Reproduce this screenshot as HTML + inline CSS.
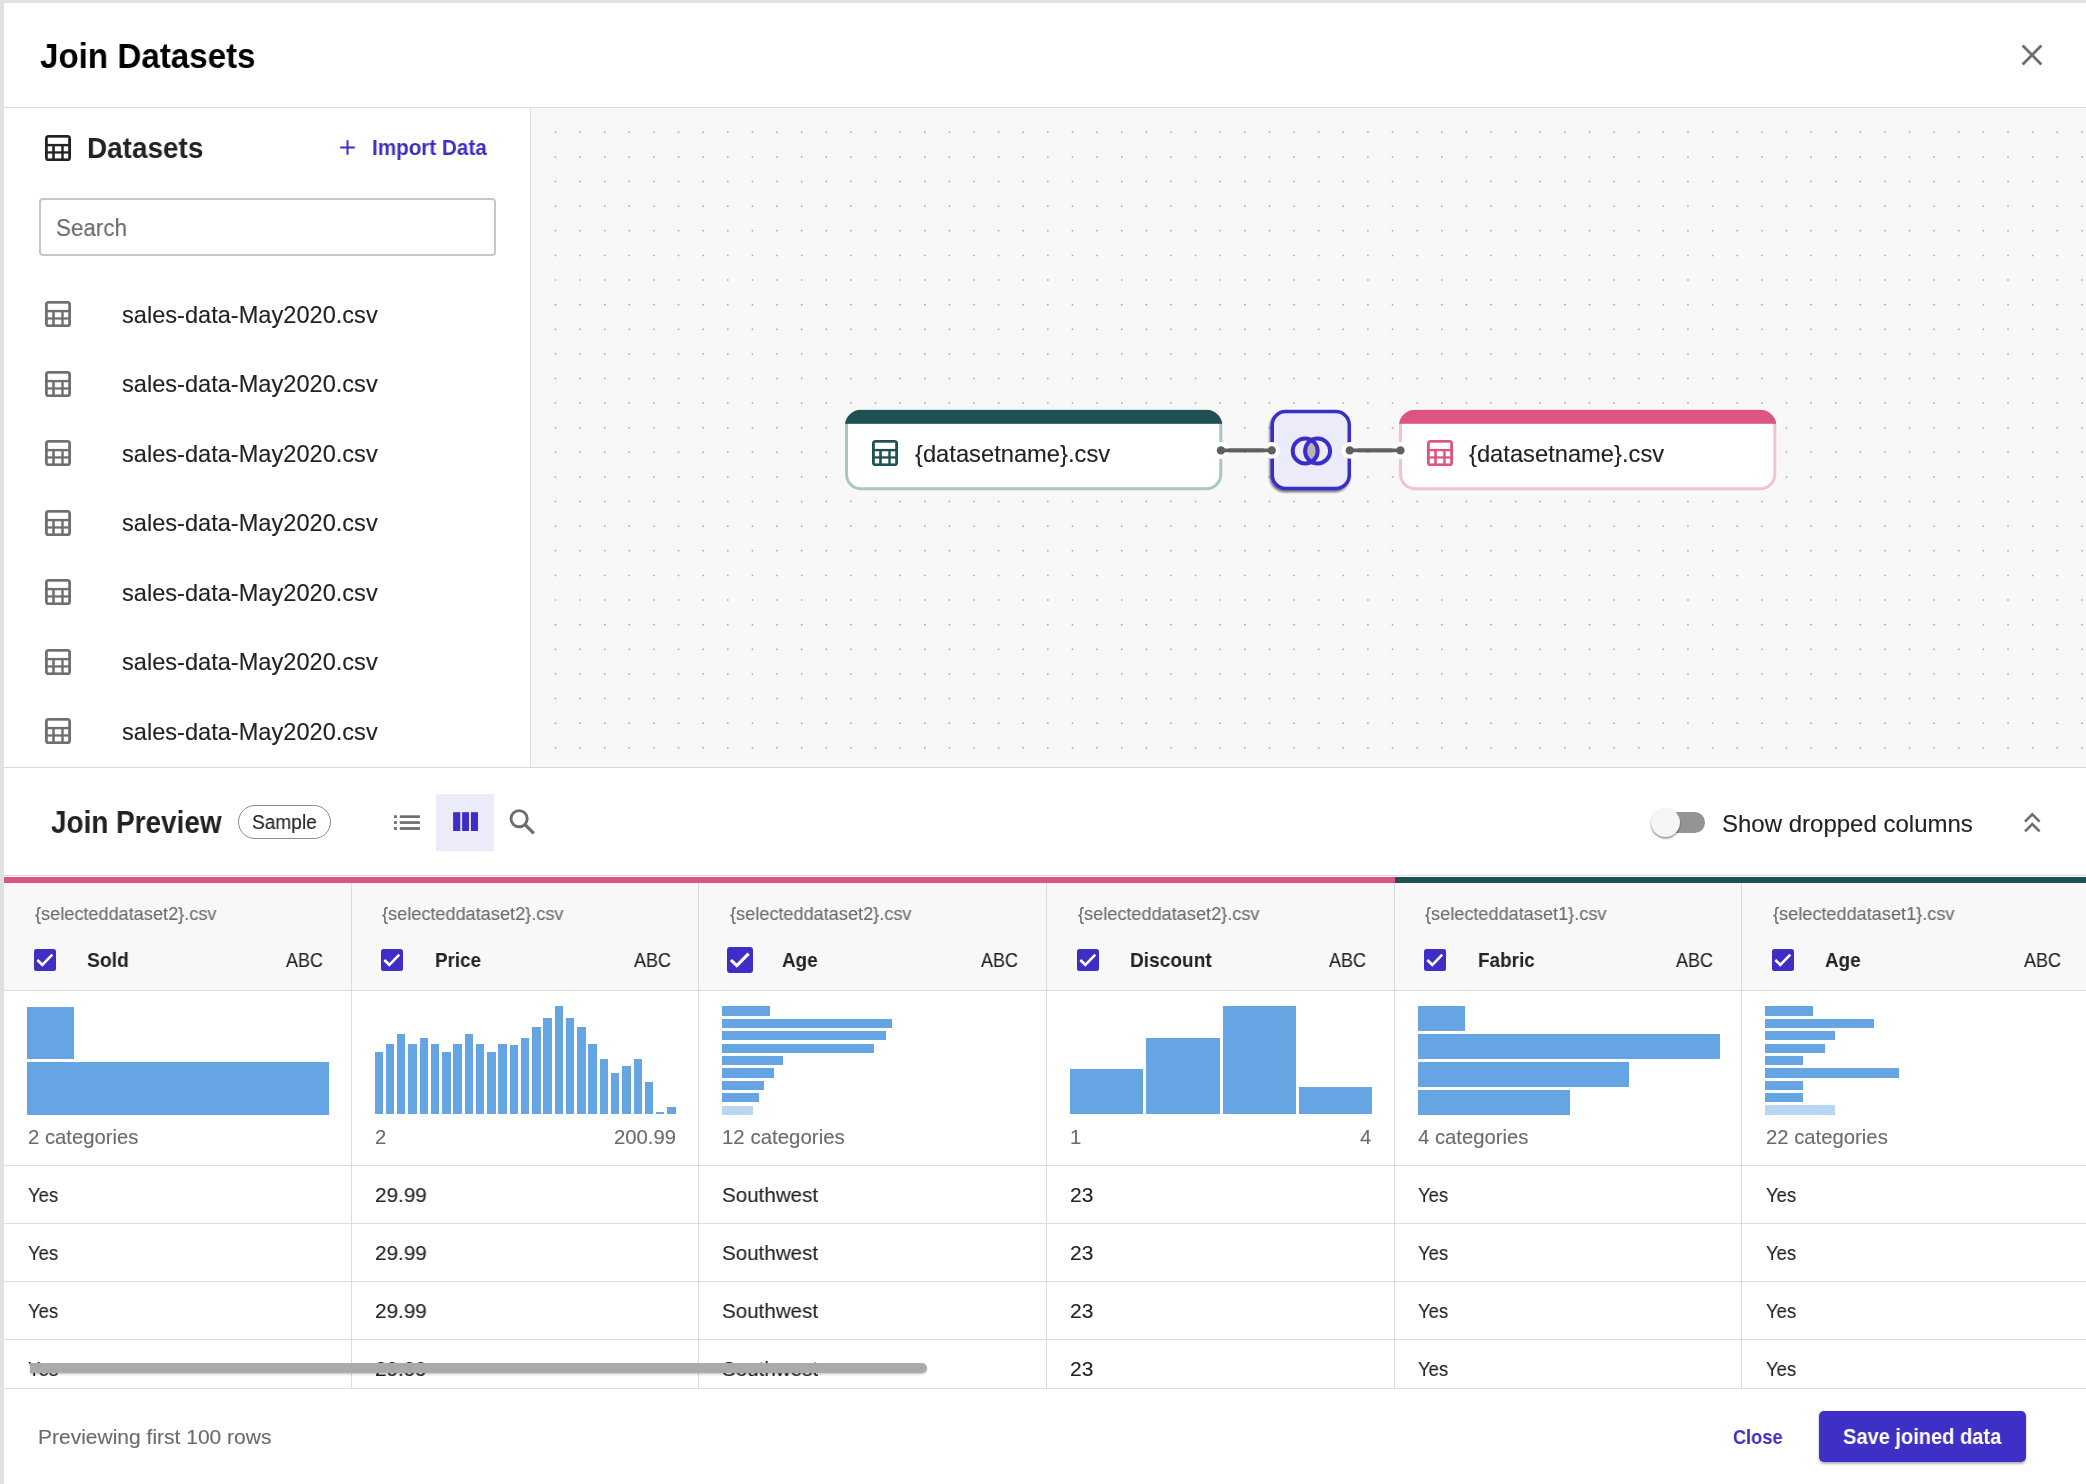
<!DOCTYPE html>
<html><head><meta charset="utf-8"><style>
html,body{margin:0;padding:0;}
body{width:2086px;height:1484px;position:relative;overflow:hidden;background:#ffffff;font-family:"Liberation Sans",sans-serif;}
.a{position:absolute;box-sizing:content-box;}
.t{position:absolute;line-height:1;white-space:nowrap;transform-origin:0 0;will-change:transform;}
.canvas{background-color:#f8f8f8;background-image:radial-gradient(circle at center,#a9a9a9 0,#a9a9a9 0.8px,rgba(169,169,169,0) 1.3px);background-size:24.6px 24.6px;background-position:12.1px 12px;}
</style></head><body>
<div class="a" style="left:0;top:0;width:2086px;height:3px;background:#e1e1e1"></div>
<div class="a" style="left:0;top:0;width:4px;height:1484px;background:#e1e1e1"></div>
<div class="a" style="left:4px;top:107px;width:2082px;height:1px;background:#d9d9d9"></div>
<svg class="a" style="left:2020px;top:43px" width="24" height="24" viewBox="0 0 24 24"><path d="M2.6 2.6L21.4 21.4M21.4 2.6L2.6 21.4" stroke="#6e6e6e" stroke-width="2.8" fill="none"/></svg>
<div class="a" style="left:530px;top:108px;width:1px;height:660px;background:#dedede"></div>
<svg class="a" style="left:531px;top:108px" width="1555" height="660"><rect width="1555" height="660" fill="#f8f8f8"/><path fill="#a6a6a6" d="M23.71 23.55h1.5v1.5h-1.5zM48.33 23.55h1.5v1.5h-1.5zM72.95 23.55h1.5v1.5h-1.5zM97.57 23.55h1.5v1.5h-1.5zM122.19 23.55h1.5v1.5h-1.5zM146.81 23.55h1.5v1.5h-1.5zM171.43 23.55h1.5v1.5h-1.5zM196.05 23.55h1.5v1.5h-1.5zM220.67 23.55h1.5v1.5h-1.5zM245.29 23.55h1.5v1.5h-1.5zM269.91 23.55h1.5v1.5h-1.5zM294.53 23.55h1.5v1.5h-1.5zM319.15 23.55h1.5v1.5h-1.5zM343.77 23.55h1.5v1.5h-1.5zM368.39 23.55h1.5v1.5h-1.5zM393.01 23.55h1.5v1.5h-1.5zM417.63 23.55h1.5v1.5h-1.5zM442.25 23.55h1.5v1.5h-1.5zM466.87 23.55h1.5v1.5h-1.5zM491.49 23.55h1.5v1.5h-1.5zM516.11 23.55h1.5v1.5h-1.5zM540.73 23.55h1.5v1.5h-1.5zM565.35 23.55h1.5v1.5h-1.5zM589.97 23.55h1.5v1.5h-1.5zM614.59 23.55h1.5v1.5h-1.5zM639.21 23.55h1.5v1.5h-1.5zM663.83 23.55h1.5v1.5h-1.5zM688.45 23.55h1.5v1.5h-1.5zM713.07 23.55h1.5v1.5h-1.5zM737.69 23.55h1.5v1.5h-1.5zM762.31 23.55h1.5v1.5h-1.5zM786.93 23.55h1.5v1.5h-1.5zM811.55 23.55h1.5v1.5h-1.5zM836.17 23.55h1.5v1.5h-1.5zM860.79 23.55h1.5v1.5h-1.5zM885.41 23.55h1.5v1.5h-1.5zM910.03 23.55h1.5v1.5h-1.5zM934.65 23.55h1.5v1.5h-1.5zM959.27 23.55h1.5v1.5h-1.5zM983.89 23.55h1.5v1.5h-1.5zM1008.51 23.55h1.5v1.5h-1.5zM1033.13 23.55h1.5v1.5h-1.5zM1057.75 23.55h1.5v1.5h-1.5zM1082.37 23.55h1.5v1.5h-1.5zM1106.99 23.55h1.5v1.5h-1.5zM1131.61 23.55h1.5v1.5h-1.5zM1156.23 23.55h1.5v1.5h-1.5zM1180.85 23.55h1.5v1.5h-1.5zM1205.47 23.55h1.5v1.5h-1.5zM1230.09 23.55h1.5v1.5h-1.5zM1254.71 23.55h1.5v1.5h-1.5zM1279.33 23.55h1.5v1.5h-1.5zM1303.95 23.55h1.5v1.5h-1.5zM1328.57 23.55h1.5v1.5h-1.5zM1353.19 23.55h1.5v1.5h-1.5zM1377.81 23.55h1.5v1.5h-1.5zM1402.43 23.55h1.5v1.5h-1.5zM1427.05 23.55h1.5v1.5h-1.5zM1451.67 23.55h1.5v1.5h-1.5zM1476.29 23.55h1.5v1.5h-1.5zM1500.91 23.55h1.5v1.5h-1.5zM1525.53 23.55h1.5v1.5h-1.5zM1550.15 23.55h1.5v1.5h-1.5zM23.71 48.17h1.5v1.5h-1.5zM48.33 48.17h1.5v1.5h-1.5zM72.95 48.17h1.5v1.5h-1.5zM97.57 48.17h1.5v1.5h-1.5zM122.19 48.17h1.5v1.5h-1.5zM146.81 48.17h1.5v1.5h-1.5zM171.43 48.17h1.5v1.5h-1.5zM196.05 48.17h1.5v1.5h-1.5zM220.67 48.17h1.5v1.5h-1.5zM245.29 48.17h1.5v1.5h-1.5zM269.91 48.17h1.5v1.5h-1.5zM294.53 48.17h1.5v1.5h-1.5zM319.15 48.17h1.5v1.5h-1.5zM343.77 48.17h1.5v1.5h-1.5zM368.39 48.17h1.5v1.5h-1.5zM393.01 48.17h1.5v1.5h-1.5zM417.63 48.17h1.5v1.5h-1.5zM442.25 48.17h1.5v1.5h-1.5zM466.87 48.17h1.5v1.5h-1.5zM491.49 48.17h1.5v1.5h-1.5zM516.11 48.17h1.5v1.5h-1.5zM540.73 48.17h1.5v1.5h-1.5zM565.35 48.17h1.5v1.5h-1.5zM589.97 48.17h1.5v1.5h-1.5zM614.59 48.17h1.5v1.5h-1.5zM639.21 48.17h1.5v1.5h-1.5zM663.83 48.17h1.5v1.5h-1.5zM688.45 48.17h1.5v1.5h-1.5zM713.07 48.17h1.5v1.5h-1.5zM737.69 48.17h1.5v1.5h-1.5zM762.31 48.17h1.5v1.5h-1.5zM786.93 48.17h1.5v1.5h-1.5zM811.55 48.17h1.5v1.5h-1.5zM836.17 48.17h1.5v1.5h-1.5zM860.79 48.17h1.5v1.5h-1.5zM885.41 48.17h1.5v1.5h-1.5zM910.03 48.17h1.5v1.5h-1.5zM934.65 48.17h1.5v1.5h-1.5zM959.27 48.17h1.5v1.5h-1.5zM983.89 48.17h1.5v1.5h-1.5zM1008.51 48.17h1.5v1.5h-1.5zM1033.13 48.17h1.5v1.5h-1.5zM1057.75 48.17h1.5v1.5h-1.5zM1082.37 48.17h1.5v1.5h-1.5zM1106.99 48.17h1.5v1.5h-1.5zM1131.61 48.17h1.5v1.5h-1.5zM1156.23 48.17h1.5v1.5h-1.5zM1180.85 48.17h1.5v1.5h-1.5zM1205.47 48.17h1.5v1.5h-1.5zM1230.09 48.17h1.5v1.5h-1.5zM1254.71 48.17h1.5v1.5h-1.5zM1279.33 48.17h1.5v1.5h-1.5zM1303.95 48.17h1.5v1.5h-1.5zM1328.57 48.17h1.5v1.5h-1.5zM1353.19 48.17h1.5v1.5h-1.5zM1377.81 48.17h1.5v1.5h-1.5zM1402.43 48.17h1.5v1.5h-1.5zM1427.05 48.17h1.5v1.5h-1.5zM1451.67 48.17h1.5v1.5h-1.5zM1476.29 48.17h1.5v1.5h-1.5zM1500.91 48.17h1.5v1.5h-1.5zM1525.53 48.17h1.5v1.5h-1.5zM1550.15 48.17h1.5v1.5h-1.5zM23.71 72.79h1.5v1.5h-1.5zM48.33 72.79h1.5v1.5h-1.5zM72.95 72.79h1.5v1.5h-1.5zM97.57 72.79h1.5v1.5h-1.5zM122.19 72.79h1.5v1.5h-1.5zM146.81 72.79h1.5v1.5h-1.5zM171.43 72.79h1.5v1.5h-1.5zM196.05 72.79h1.5v1.5h-1.5zM220.67 72.79h1.5v1.5h-1.5zM245.29 72.79h1.5v1.5h-1.5zM269.91 72.79h1.5v1.5h-1.5zM294.53 72.79h1.5v1.5h-1.5zM319.15 72.79h1.5v1.5h-1.5zM343.77 72.79h1.5v1.5h-1.5zM368.39 72.79h1.5v1.5h-1.5zM393.01 72.79h1.5v1.5h-1.5zM417.63 72.79h1.5v1.5h-1.5zM442.25 72.79h1.5v1.5h-1.5zM466.87 72.79h1.5v1.5h-1.5zM491.49 72.79h1.5v1.5h-1.5zM516.11 72.79h1.5v1.5h-1.5zM540.73 72.79h1.5v1.5h-1.5zM565.35 72.79h1.5v1.5h-1.5zM589.97 72.79h1.5v1.5h-1.5zM614.59 72.79h1.5v1.5h-1.5zM639.21 72.79h1.5v1.5h-1.5zM663.83 72.79h1.5v1.5h-1.5zM688.45 72.79h1.5v1.5h-1.5zM713.07 72.79h1.5v1.5h-1.5zM737.69 72.79h1.5v1.5h-1.5zM762.31 72.79h1.5v1.5h-1.5zM786.93 72.79h1.5v1.5h-1.5zM811.55 72.79h1.5v1.5h-1.5zM836.17 72.79h1.5v1.5h-1.5zM860.79 72.79h1.5v1.5h-1.5zM885.41 72.79h1.5v1.5h-1.5zM910.03 72.79h1.5v1.5h-1.5zM934.65 72.79h1.5v1.5h-1.5zM959.27 72.79h1.5v1.5h-1.5zM983.89 72.79h1.5v1.5h-1.5zM1008.51 72.79h1.5v1.5h-1.5zM1033.13 72.79h1.5v1.5h-1.5zM1057.75 72.79h1.5v1.5h-1.5zM1082.37 72.79h1.5v1.5h-1.5zM1106.99 72.79h1.5v1.5h-1.5zM1131.61 72.79h1.5v1.5h-1.5zM1156.23 72.79h1.5v1.5h-1.5zM1180.85 72.79h1.5v1.5h-1.5zM1205.47 72.79h1.5v1.5h-1.5zM1230.09 72.79h1.5v1.5h-1.5zM1254.71 72.79h1.5v1.5h-1.5zM1279.33 72.79h1.5v1.5h-1.5zM1303.95 72.79h1.5v1.5h-1.5zM1328.57 72.79h1.5v1.5h-1.5zM1353.19 72.79h1.5v1.5h-1.5zM1377.81 72.79h1.5v1.5h-1.5zM1402.43 72.79h1.5v1.5h-1.5zM1427.05 72.79h1.5v1.5h-1.5zM1451.67 72.79h1.5v1.5h-1.5zM1476.29 72.79h1.5v1.5h-1.5zM1500.91 72.79h1.5v1.5h-1.5zM1525.53 72.79h1.5v1.5h-1.5zM1550.15 72.79h1.5v1.5h-1.5zM23.71 97.41h1.5v1.5h-1.5zM48.33 97.41h1.5v1.5h-1.5zM72.95 97.41h1.5v1.5h-1.5zM97.57 97.41h1.5v1.5h-1.5zM122.19 97.41h1.5v1.5h-1.5zM146.81 97.41h1.5v1.5h-1.5zM171.43 97.41h1.5v1.5h-1.5zM196.05 97.41h1.5v1.5h-1.5zM220.67 97.41h1.5v1.5h-1.5zM245.29 97.41h1.5v1.5h-1.5zM269.91 97.41h1.5v1.5h-1.5zM294.53 97.41h1.5v1.5h-1.5zM319.15 97.41h1.5v1.5h-1.5zM343.77 97.41h1.5v1.5h-1.5zM368.39 97.41h1.5v1.5h-1.5zM393.01 97.41h1.5v1.5h-1.5zM417.63 97.41h1.5v1.5h-1.5zM442.25 97.41h1.5v1.5h-1.5zM466.87 97.41h1.5v1.5h-1.5zM491.49 97.41h1.5v1.5h-1.5zM516.11 97.41h1.5v1.5h-1.5zM540.73 97.41h1.5v1.5h-1.5zM565.35 97.41h1.5v1.5h-1.5zM589.97 97.41h1.5v1.5h-1.5zM614.59 97.41h1.5v1.5h-1.5zM639.21 97.41h1.5v1.5h-1.5zM663.83 97.41h1.5v1.5h-1.5zM688.45 97.41h1.5v1.5h-1.5zM713.07 97.41h1.5v1.5h-1.5zM737.69 97.41h1.5v1.5h-1.5zM762.31 97.41h1.5v1.5h-1.5zM786.93 97.41h1.5v1.5h-1.5zM811.55 97.41h1.5v1.5h-1.5zM836.17 97.41h1.5v1.5h-1.5zM860.79 97.41h1.5v1.5h-1.5zM885.41 97.41h1.5v1.5h-1.5zM910.03 97.41h1.5v1.5h-1.5zM934.65 97.41h1.5v1.5h-1.5zM959.27 97.41h1.5v1.5h-1.5zM983.89 97.41h1.5v1.5h-1.5zM1008.51 97.41h1.5v1.5h-1.5zM1033.13 97.41h1.5v1.5h-1.5zM1057.75 97.41h1.5v1.5h-1.5zM1082.37 97.41h1.5v1.5h-1.5zM1106.99 97.41h1.5v1.5h-1.5zM1131.61 97.41h1.5v1.5h-1.5zM1156.23 97.41h1.5v1.5h-1.5zM1180.85 97.41h1.5v1.5h-1.5zM1205.47 97.41h1.5v1.5h-1.5zM1230.09 97.41h1.5v1.5h-1.5zM1254.71 97.41h1.5v1.5h-1.5zM1279.33 97.41h1.5v1.5h-1.5zM1303.95 97.41h1.5v1.5h-1.5zM1328.57 97.41h1.5v1.5h-1.5zM1353.19 97.41h1.5v1.5h-1.5zM1377.81 97.41h1.5v1.5h-1.5zM1402.43 97.41h1.5v1.5h-1.5zM1427.05 97.41h1.5v1.5h-1.5zM1451.67 97.41h1.5v1.5h-1.5zM1476.29 97.41h1.5v1.5h-1.5zM1500.91 97.41h1.5v1.5h-1.5zM1525.53 97.41h1.5v1.5h-1.5zM1550.15 97.41h1.5v1.5h-1.5zM23.71 122.03h1.5v1.5h-1.5zM48.33 122.03h1.5v1.5h-1.5zM72.95 122.03h1.5v1.5h-1.5zM97.57 122.03h1.5v1.5h-1.5zM122.19 122.03h1.5v1.5h-1.5zM146.81 122.03h1.5v1.5h-1.5zM171.43 122.03h1.5v1.5h-1.5zM196.05 122.03h1.5v1.5h-1.5zM220.67 122.03h1.5v1.5h-1.5zM245.29 122.03h1.5v1.5h-1.5zM269.91 122.03h1.5v1.5h-1.5zM294.53 122.03h1.5v1.5h-1.5zM319.15 122.03h1.5v1.5h-1.5zM343.77 122.03h1.5v1.5h-1.5zM368.39 122.03h1.5v1.5h-1.5zM393.01 122.03h1.5v1.5h-1.5zM417.63 122.03h1.5v1.5h-1.5zM442.25 122.03h1.5v1.5h-1.5zM466.87 122.03h1.5v1.5h-1.5zM491.49 122.03h1.5v1.5h-1.5zM516.11 122.03h1.5v1.5h-1.5zM540.73 122.03h1.5v1.5h-1.5zM565.35 122.03h1.5v1.5h-1.5zM589.97 122.03h1.5v1.5h-1.5zM614.59 122.03h1.5v1.5h-1.5zM639.21 122.03h1.5v1.5h-1.5zM663.83 122.03h1.5v1.5h-1.5zM688.45 122.03h1.5v1.5h-1.5zM713.07 122.03h1.5v1.5h-1.5zM737.69 122.03h1.5v1.5h-1.5zM762.31 122.03h1.5v1.5h-1.5zM786.93 122.03h1.5v1.5h-1.5zM811.55 122.03h1.5v1.5h-1.5zM836.17 122.03h1.5v1.5h-1.5zM860.79 122.03h1.5v1.5h-1.5zM885.41 122.03h1.5v1.5h-1.5zM910.03 122.03h1.5v1.5h-1.5zM934.65 122.03h1.5v1.5h-1.5zM959.27 122.03h1.5v1.5h-1.5zM983.89 122.03h1.5v1.5h-1.5zM1008.51 122.03h1.5v1.5h-1.5zM1033.13 122.03h1.5v1.5h-1.5zM1057.75 122.03h1.5v1.5h-1.5zM1082.37 122.03h1.5v1.5h-1.5zM1106.99 122.03h1.5v1.5h-1.5zM1131.61 122.03h1.5v1.5h-1.5zM1156.23 122.03h1.5v1.5h-1.5zM1180.85 122.03h1.5v1.5h-1.5zM1205.47 122.03h1.5v1.5h-1.5zM1230.09 122.03h1.5v1.5h-1.5zM1254.71 122.03h1.5v1.5h-1.5zM1279.33 122.03h1.5v1.5h-1.5zM1303.95 122.03h1.5v1.5h-1.5zM1328.57 122.03h1.5v1.5h-1.5zM1353.19 122.03h1.5v1.5h-1.5zM1377.81 122.03h1.5v1.5h-1.5zM1402.43 122.03h1.5v1.5h-1.5zM1427.05 122.03h1.5v1.5h-1.5zM1451.67 122.03h1.5v1.5h-1.5zM1476.29 122.03h1.5v1.5h-1.5zM1500.91 122.03h1.5v1.5h-1.5zM1525.53 122.03h1.5v1.5h-1.5zM1550.15 122.03h1.5v1.5h-1.5zM23.71 146.65h1.5v1.5h-1.5zM48.33 146.65h1.5v1.5h-1.5zM72.95 146.65h1.5v1.5h-1.5zM97.57 146.65h1.5v1.5h-1.5zM122.19 146.65h1.5v1.5h-1.5zM146.81 146.65h1.5v1.5h-1.5zM171.43 146.65h1.5v1.5h-1.5zM196.05 146.65h1.5v1.5h-1.5zM220.67 146.65h1.5v1.5h-1.5zM245.29 146.65h1.5v1.5h-1.5zM269.91 146.65h1.5v1.5h-1.5zM294.53 146.65h1.5v1.5h-1.5zM319.15 146.65h1.5v1.5h-1.5zM343.77 146.65h1.5v1.5h-1.5zM368.39 146.65h1.5v1.5h-1.5zM393.01 146.65h1.5v1.5h-1.5zM417.63 146.65h1.5v1.5h-1.5zM442.25 146.65h1.5v1.5h-1.5zM466.87 146.65h1.5v1.5h-1.5zM491.49 146.65h1.5v1.5h-1.5zM516.11 146.65h1.5v1.5h-1.5zM540.73 146.65h1.5v1.5h-1.5zM565.35 146.65h1.5v1.5h-1.5zM589.97 146.65h1.5v1.5h-1.5zM614.59 146.65h1.5v1.5h-1.5zM639.21 146.65h1.5v1.5h-1.5zM663.83 146.65h1.5v1.5h-1.5zM688.45 146.65h1.5v1.5h-1.5zM713.07 146.65h1.5v1.5h-1.5zM737.69 146.65h1.5v1.5h-1.5zM762.31 146.65h1.5v1.5h-1.5zM786.93 146.65h1.5v1.5h-1.5zM811.55 146.65h1.5v1.5h-1.5zM836.17 146.65h1.5v1.5h-1.5zM860.79 146.65h1.5v1.5h-1.5zM885.41 146.65h1.5v1.5h-1.5zM910.03 146.65h1.5v1.5h-1.5zM934.65 146.65h1.5v1.5h-1.5zM959.27 146.65h1.5v1.5h-1.5zM983.89 146.65h1.5v1.5h-1.5zM1008.51 146.65h1.5v1.5h-1.5zM1033.13 146.65h1.5v1.5h-1.5zM1057.75 146.65h1.5v1.5h-1.5zM1082.37 146.65h1.5v1.5h-1.5zM1106.99 146.65h1.5v1.5h-1.5zM1131.61 146.65h1.5v1.5h-1.5zM1156.23 146.65h1.5v1.5h-1.5zM1180.85 146.65h1.5v1.5h-1.5zM1205.47 146.65h1.5v1.5h-1.5zM1230.09 146.65h1.5v1.5h-1.5zM1254.71 146.65h1.5v1.5h-1.5zM1279.33 146.65h1.5v1.5h-1.5zM1303.95 146.65h1.5v1.5h-1.5zM1328.57 146.65h1.5v1.5h-1.5zM1353.19 146.65h1.5v1.5h-1.5zM1377.81 146.65h1.5v1.5h-1.5zM1402.43 146.65h1.5v1.5h-1.5zM1427.05 146.65h1.5v1.5h-1.5zM1451.67 146.65h1.5v1.5h-1.5zM1476.29 146.65h1.5v1.5h-1.5zM1500.91 146.65h1.5v1.5h-1.5zM1525.53 146.65h1.5v1.5h-1.5zM1550.15 146.65h1.5v1.5h-1.5zM23.71 171.27h1.5v1.5h-1.5zM48.33 171.27h1.5v1.5h-1.5zM72.95 171.27h1.5v1.5h-1.5zM97.57 171.27h1.5v1.5h-1.5zM122.19 171.27h1.5v1.5h-1.5zM146.81 171.27h1.5v1.5h-1.5zM171.43 171.27h1.5v1.5h-1.5zM196.05 171.27h1.5v1.5h-1.5zM220.67 171.27h1.5v1.5h-1.5zM245.29 171.27h1.5v1.5h-1.5zM269.91 171.27h1.5v1.5h-1.5zM294.53 171.27h1.5v1.5h-1.5zM319.15 171.27h1.5v1.5h-1.5zM343.77 171.27h1.5v1.5h-1.5zM368.39 171.27h1.5v1.5h-1.5zM393.01 171.27h1.5v1.5h-1.5zM417.63 171.27h1.5v1.5h-1.5zM442.25 171.27h1.5v1.5h-1.5zM466.87 171.27h1.5v1.5h-1.5zM491.49 171.27h1.5v1.5h-1.5zM516.11 171.27h1.5v1.5h-1.5zM540.73 171.27h1.5v1.5h-1.5zM565.35 171.27h1.5v1.5h-1.5zM589.97 171.27h1.5v1.5h-1.5zM614.59 171.27h1.5v1.5h-1.5zM639.21 171.27h1.5v1.5h-1.5zM663.83 171.27h1.5v1.5h-1.5zM688.45 171.27h1.5v1.5h-1.5zM713.07 171.27h1.5v1.5h-1.5zM737.69 171.27h1.5v1.5h-1.5zM762.31 171.27h1.5v1.5h-1.5zM786.93 171.27h1.5v1.5h-1.5zM811.55 171.27h1.5v1.5h-1.5zM836.17 171.27h1.5v1.5h-1.5zM860.79 171.27h1.5v1.5h-1.5zM885.41 171.27h1.5v1.5h-1.5zM910.03 171.27h1.5v1.5h-1.5zM934.65 171.27h1.5v1.5h-1.5zM959.27 171.27h1.5v1.5h-1.5zM983.89 171.27h1.5v1.5h-1.5zM1008.51 171.27h1.5v1.5h-1.5zM1033.13 171.27h1.5v1.5h-1.5zM1057.75 171.27h1.5v1.5h-1.5zM1082.37 171.27h1.5v1.5h-1.5zM1106.99 171.27h1.5v1.5h-1.5zM1131.61 171.27h1.5v1.5h-1.5zM1156.23 171.27h1.5v1.5h-1.5zM1180.85 171.27h1.5v1.5h-1.5zM1205.47 171.27h1.5v1.5h-1.5zM1230.09 171.27h1.5v1.5h-1.5zM1254.71 171.27h1.5v1.5h-1.5zM1279.33 171.27h1.5v1.5h-1.5zM1303.95 171.27h1.5v1.5h-1.5zM1328.57 171.27h1.5v1.5h-1.5zM1353.19 171.27h1.5v1.5h-1.5zM1377.81 171.27h1.5v1.5h-1.5zM1402.43 171.27h1.5v1.5h-1.5zM1427.05 171.27h1.5v1.5h-1.5zM1451.67 171.27h1.5v1.5h-1.5zM1476.29 171.27h1.5v1.5h-1.5zM1500.91 171.27h1.5v1.5h-1.5zM1525.53 171.27h1.5v1.5h-1.5zM1550.15 171.27h1.5v1.5h-1.5zM23.71 195.89h1.5v1.5h-1.5zM48.33 195.89h1.5v1.5h-1.5zM72.95 195.89h1.5v1.5h-1.5zM97.57 195.89h1.5v1.5h-1.5zM122.19 195.89h1.5v1.5h-1.5zM146.81 195.89h1.5v1.5h-1.5zM171.43 195.89h1.5v1.5h-1.5zM196.05 195.89h1.5v1.5h-1.5zM220.67 195.89h1.5v1.5h-1.5zM245.29 195.89h1.5v1.5h-1.5zM269.91 195.89h1.5v1.5h-1.5zM294.53 195.89h1.5v1.5h-1.5zM319.15 195.89h1.5v1.5h-1.5zM343.77 195.89h1.5v1.5h-1.5zM368.39 195.89h1.5v1.5h-1.5zM393.01 195.89h1.5v1.5h-1.5zM417.63 195.89h1.5v1.5h-1.5zM442.25 195.89h1.5v1.5h-1.5zM466.87 195.89h1.5v1.5h-1.5zM491.49 195.89h1.5v1.5h-1.5zM516.11 195.89h1.5v1.5h-1.5zM540.73 195.89h1.5v1.5h-1.5zM565.35 195.89h1.5v1.5h-1.5zM589.97 195.89h1.5v1.5h-1.5zM614.59 195.89h1.5v1.5h-1.5zM639.21 195.89h1.5v1.5h-1.5zM663.83 195.89h1.5v1.5h-1.5zM688.45 195.89h1.5v1.5h-1.5zM713.07 195.89h1.5v1.5h-1.5zM737.69 195.89h1.5v1.5h-1.5zM762.31 195.89h1.5v1.5h-1.5zM786.93 195.89h1.5v1.5h-1.5zM811.55 195.89h1.5v1.5h-1.5zM836.17 195.89h1.5v1.5h-1.5zM860.79 195.89h1.5v1.5h-1.5zM885.41 195.89h1.5v1.5h-1.5zM910.03 195.89h1.5v1.5h-1.5zM934.65 195.89h1.5v1.5h-1.5zM959.27 195.89h1.5v1.5h-1.5zM983.89 195.89h1.5v1.5h-1.5zM1008.51 195.89h1.5v1.5h-1.5zM1033.13 195.89h1.5v1.5h-1.5zM1057.75 195.89h1.5v1.5h-1.5zM1082.37 195.89h1.5v1.5h-1.5zM1106.99 195.89h1.5v1.5h-1.5zM1131.61 195.89h1.5v1.5h-1.5zM1156.23 195.89h1.5v1.5h-1.5zM1180.85 195.89h1.5v1.5h-1.5zM1205.47 195.89h1.5v1.5h-1.5zM1230.09 195.89h1.5v1.5h-1.5zM1254.71 195.89h1.5v1.5h-1.5zM1279.33 195.89h1.5v1.5h-1.5zM1303.95 195.89h1.5v1.5h-1.5zM1328.57 195.89h1.5v1.5h-1.5zM1353.19 195.89h1.5v1.5h-1.5zM1377.81 195.89h1.5v1.5h-1.5zM1402.43 195.89h1.5v1.5h-1.5zM1427.05 195.89h1.5v1.5h-1.5zM1451.67 195.89h1.5v1.5h-1.5zM1476.29 195.89h1.5v1.5h-1.5zM1500.91 195.89h1.5v1.5h-1.5zM1525.53 195.89h1.5v1.5h-1.5zM1550.15 195.89h1.5v1.5h-1.5zM23.71 220.51h1.5v1.5h-1.5zM48.33 220.51h1.5v1.5h-1.5zM72.95 220.51h1.5v1.5h-1.5zM97.57 220.51h1.5v1.5h-1.5zM122.19 220.51h1.5v1.5h-1.5zM146.81 220.51h1.5v1.5h-1.5zM171.43 220.51h1.5v1.5h-1.5zM196.05 220.51h1.5v1.5h-1.5zM220.67 220.51h1.5v1.5h-1.5zM245.29 220.51h1.5v1.5h-1.5zM269.91 220.51h1.5v1.5h-1.5zM294.53 220.51h1.5v1.5h-1.5zM319.15 220.51h1.5v1.5h-1.5zM343.77 220.51h1.5v1.5h-1.5zM368.39 220.51h1.5v1.5h-1.5zM393.01 220.51h1.5v1.5h-1.5zM417.63 220.51h1.5v1.5h-1.5zM442.25 220.51h1.5v1.5h-1.5zM466.87 220.51h1.5v1.5h-1.5zM491.49 220.51h1.5v1.5h-1.5zM516.11 220.51h1.5v1.5h-1.5zM540.73 220.51h1.5v1.5h-1.5zM565.35 220.51h1.5v1.5h-1.5zM589.97 220.51h1.5v1.5h-1.5zM614.59 220.51h1.5v1.5h-1.5zM639.21 220.51h1.5v1.5h-1.5zM663.83 220.51h1.5v1.5h-1.5zM688.45 220.51h1.5v1.5h-1.5zM713.07 220.51h1.5v1.5h-1.5zM737.69 220.51h1.5v1.5h-1.5zM762.31 220.51h1.5v1.5h-1.5zM786.93 220.51h1.5v1.5h-1.5zM811.55 220.51h1.5v1.5h-1.5zM836.17 220.51h1.5v1.5h-1.5zM860.79 220.51h1.5v1.5h-1.5zM885.41 220.51h1.5v1.5h-1.5zM910.03 220.51h1.5v1.5h-1.5zM934.65 220.51h1.5v1.5h-1.5zM959.27 220.51h1.5v1.5h-1.5zM983.89 220.51h1.5v1.5h-1.5zM1008.51 220.51h1.5v1.5h-1.5zM1033.13 220.51h1.5v1.5h-1.5zM1057.75 220.51h1.5v1.5h-1.5zM1082.37 220.51h1.5v1.5h-1.5zM1106.99 220.51h1.5v1.5h-1.5zM1131.61 220.51h1.5v1.5h-1.5zM1156.23 220.51h1.5v1.5h-1.5zM1180.85 220.51h1.5v1.5h-1.5zM1205.47 220.51h1.5v1.5h-1.5zM1230.09 220.51h1.5v1.5h-1.5zM1254.71 220.51h1.5v1.5h-1.5zM1279.33 220.51h1.5v1.5h-1.5zM1303.95 220.51h1.5v1.5h-1.5zM1328.57 220.51h1.5v1.5h-1.5zM1353.19 220.51h1.5v1.5h-1.5zM1377.81 220.51h1.5v1.5h-1.5zM1402.43 220.51h1.5v1.5h-1.5zM1427.05 220.51h1.5v1.5h-1.5zM1451.67 220.51h1.5v1.5h-1.5zM1476.29 220.51h1.5v1.5h-1.5zM1500.91 220.51h1.5v1.5h-1.5zM1525.53 220.51h1.5v1.5h-1.5zM1550.15 220.51h1.5v1.5h-1.5zM23.71 245.13h1.5v1.5h-1.5zM48.33 245.13h1.5v1.5h-1.5zM72.95 245.13h1.5v1.5h-1.5zM97.57 245.13h1.5v1.5h-1.5zM122.19 245.13h1.5v1.5h-1.5zM146.81 245.13h1.5v1.5h-1.5zM171.43 245.13h1.5v1.5h-1.5zM196.05 245.13h1.5v1.5h-1.5zM220.67 245.13h1.5v1.5h-1.5zM245.29 245.13h1.5v1.5h-1.5zM269.91 245.13h1.5v1.5h-1.5zM294.53 245.13h1.5v1.5h-1.5zM319.15 245.13h1.5v1.5h-1.5zM343.77 245.13h1.5v1.5h-1.5zM368.39 245.13h1.5v1.5h-1.5zM393.01 245.13h1.5v1.5h-1.5zM417.63 245.13h1.5v1.5h-1.5zM442.25 245.13h1.5v1.5h-1.5zM466.87 245.13h1.5v1.5h-1.5zM491.49 245.13h1.5v1.5h-1.5zM516.11 245.13h1.5v1.5h-1.5zM540.73 245.13h1.5v1.5h-1.5zM565.35 245.13h1.5v1.5h-1.5zM589.97 245.13h1.5v1.5h-1.5zM614.59 245.13h1.5v1.5h-1.5zM639.21 245.13h1.5v1.5h-1.5zM663.83 245.13h1.5v1.5h-1.5zM688.45 245.13h1.5v1.5h-1.5zM713.07 245.13h1.5v1.5h-1.5zM737.69 245.13h1.5v1.5h-1.5zM762.31 245.13h1.5v1.5h-1.5zM786.93 245.13h1.5v1.5h-1.5zM811.55 245.13h1.5v1.5h-1.5zM836.17 245.13h1.5v1.5h-1.5zM860.79 245.13h1.5v1.5h-1.5zM885.41 245.13h1.5v1.5h-1.5zM910.03 245.13h1.5v1.5h-1.5zM934.65 245.13h1.5v1.5h-1.5zM959.27 245.13h1.5v1.5h-1.5zM983.89 245.13h1.5v1.5h-1.5zM1008.51 245.13h1.5v1.5h-1.5zM1033.13 245.13h1.5v1.5h-1.5zM1057.75 245.13h1.5v1.5h-1.5zM1082.37 245.13h1.5v1.5h-1.5zM1106.99 245.13h1.5v1.5h-1.5zM1131.61 245.13h1.5v1.5h-1.5zM1156.23 245.13h1.5v1.5h-1.5zM1180.85 245.13h1.5v1.5h-1.5zM1205.47 245.13h1.5v1.5h-1.5zM1230.09 245.13h1.5v1.5h-1.5zM1254.71 245.13h1.5v1.5h-1.5zM1279.33 245.13h1.5v1.5h-1.5zM1303.95 245.13h1.5v1.5h-1.5zM1328.57 245.13h1.5v1.5h-1.5zM1353.19 245.13h1.5v1.5h-1.5zM1377.81 245.13h1.5v1.5h-1.5zM1402.43 245.13h1.5v1.5h-1.5zM1427.05 245.13h1.5v1.5h-1.5zM1451.67 245.13h1.5v1.5h-1.5zM1476.29 245.13h1.5v1.5h-1.5zM1500.91 245.13h1.5v1.5h-1.5zM1525.53 245.13h1.5v1.5h-1.5zM1550.15 245.13h1.5v1.5h-1.5zM23.71 269.75h1.5v1.5h-1.5zM48.33 269.75h1.5v1.5h-1.5zM72.95 269.75h1.5v1.5h-1.5zM97.57 269.75h1.5v1.5h-1.5zM122.19 269.75h1.5v1.5h-1.5zM146.81 269.75h1.5v1.5h-1.5zM171.43 269.75h1.5v1.5h-1.5zM196.05 269.75h1.5v1.5h-1.5zM220.67 269.75h1.5v1.5h-1.5zM245.29 269.75h1.5v1.5h-1.5zM269.91 269.75h1.5v1.5h-1.5zM294.53 269.75h1.5v1.5h-1.5zM319.15 269.75h1.5v1.5h-1.5zM343.77 269.75h1.5v1.5h-1.5zM368.39 269.75h1.5v1.5h-1.5zM393.01 269.75h1.5v1.5h-1.5zM417.63 269.75h1.5v1.5h-1.5zM442.25 269.75h1.5v1.5h-1.5zM466.87 269.75h1.5v1.5h-1.5zM491.49 269.75h1.5v1.5h-1.5zM516.11 269.75h1.5v1.5h-1.5zM540.73 269.75h1.5v1.5h-1.5zM565.35 269.75h1.5v1.5h-1.5zM589.97 269.75h1.5v1.5h-1.5zM614.59 269.75h1.5v1.5h-1.5zM639.21 269.75h1.5v1.5h-1.5zM663.83 269.75h1.5v1.5h-1.5zM688.45 269.75h1.5v1.5h-1.5zM713.07 269.75h1.5v1.5h-1.5zM737.69 269.75h1.5v1.5h-1.5zM762.31 269.75h1.5v1.5h-1.5zM786.93 269.75h1.5v1.5h-1.5zM811.55 269.75h1.5v1.5h-1.5zM836.17 269.75h1.5v1.5h-1.5zM860.79 269.75h1.5v1.5h-1.5zM885.41 269.75h1.5v1.5h-1.5zM910.03 269.75h1.5v1.5h-1.5zM934.65 269.75h1.5v1.5h-1.5zM959.27 269.75h1.5v1.5h-1.5zM983.89 269.75h1.5v1.5h-1.5zM1008.51 269.75h1.5v1.5h-1.5zM1033.13 269.75h1.5v1.5h-1.5zM1057.75 269.75h1.5v1.5h-1.5zM1082.37 269.75h1.5v1.5h-1.5zM1106.99 269.75h1.5v1.5h-1.5zM1131.61 269.75h1.5v1.5h-1.5zM1156.23 269.75h1.5v1.5h-1.5zM1180.85 269.75h1.5v1.5h-1.5zM1205.47 269.75h1.5v1.5h-1.5zM1230.09 269.75h1.5v1.5h-1.5zM1254.71 269.75h1.5v1.5h-1.5zM1279.33 269.75h1.5v1.5h-1.5zM1303.95 269.75h1.5v1.5h-1.5zM1328.57 269.75h1.5v1.5h-1.5zM1353.19 269.75h1.5v1.5h-1.5zM1377.81 269.75h1.5v1.5h-1.5zM1402.43 269.75h1.5v1.5h-1.5zM1427.05 269.75h1.5v1.5h-1.5zM1451.67 269.75h1.5v1.5h-1.5zM1476.29 269.75h1.5v1.5h-1.5zM1500.91 269.75h1.5v1.5h-1.5zM1525.53 269.75h1.5v1.5h-1.5zM1550.15 269.75h1.5v1.5h-1.5zM23.71 294.37h1.5v1.5h-1.5zM48.33 294.37h1.5v1.5h-1.5zM72.95 294.37h1.5v1.5h-1.5zM97.57 294.37h1.5v1.5h-1.5zM122.19 294.37h1.5v1.5h-1.5zM146.81 294.37h1.5v1.5h-1.5zM171.43 294.37h1.5v1.5h-1.5zM196.05 294.37h1.5v1.5h-1.5zM220.67 294.37h1.5v1.5h-1.5zM245.29 294.37h1.5v1.5h-1.5zM269.91 294.37h1.5v1.5h-1.5zM294.53 294.37h1.5v1.5h-1.5zM319.15 294.37h1.5v1.5h-1.5zM343.77 294.37h1.5v1.5h-1.5zM368.39 294.37h1.5v1.5h-1.5zM393.01 294.37h1.5v1.5h-1.5zM417.63 294.37h1.5v1.5h-1.5zM442.25 294.37h1.5v1.5h-1.5zM466.87 294.37h1.5v1.5h-1.5zM491.49 294.37h1.5v1.5h-1.5zM516.11 294.37h1.5v1.5h-1.5zM540.73 294.37h1.5v1.5h-1.5zM565.35 294.37h1.5v1.5h-1.5zM589.97 294.37h1.5v1.5h-1.5zM614.59 294.37h1.5v1.5h-1.5zM639.21 294.37h1.5v1.5h-1.5zM663.83 294.37h1.5v1.5h-1.5zM688.45 294.37h1.5v1.5h-1.5zM713.07 294.37h1.5v1.5h-1.5zM737.69 294.37h1.5v1.5h-1.5zM762.31 294.37h1.5v1.5h-1.5zM786.93 294.37h1.5v1.5h-1.5zM811.55 294.37h1.5v1.5h-1.5zM836.17 294.37h1.5v1.5h-1.5zM860.79 294.37h1.5v1.5h-1.5zM885.41 294.37h1.5v1.5h-1.5zM910.03 294.37h1.5v1.5h-1.5zM934.65 294.37h1.5v1.5h-1.5zM959.27 294.37h1.5v1.5h-1.5zM983.89 294.37h1.5v1.5h-1.5zM1008.51 294.37h1.5v1.5h-1.5zM1033.13 294.37h1.5v1.5h-1.5zM1057.75 294.37h1.5v1.5h-1.5zM1082.37 294.37h1.5v1.5h-1.5zM1106.99 294.37h1.5v1.5h-1.5zM1131.61 294.37h1.5v1.5h-1.5zM1156.23 294.37h1.5v1.5h-1.5zM1180.85 294.37h1.5v1.5h-1.5zM1205.47 294.37h1.5v1.5h-1.5zM1230.09 294.37h1.5v1.5h-1.5zM1254.71 294.37h1.5v1.5h-1.5zM1279.33 294.37h1.5v1.5h-1.5zM1303.95 294.37h1.5v1.5h-1.5zM1328.57 294.37h1.5v1.5h-1.5zM1353.19 294.37h1.5v1.5h-1.5zM1377.81 294.37h1.5v1.5h-1.5zM1402.43 294.37h1.5v1.5h-1.5zM1427.05 294.37h1.5v1.5h-1.5zM1451.67 294.37h1.5v1.5h-1.5zM1476.29 294.37h1.5v1.5h-1.5zM1500.91 294.37h1.5v1.5h-1.5zM1525.53 294.37h1.5v1.5h-1.5zM1550.15 294.37h1.5v1.5h-1.5zM23.71 318.99h1.5v1.5h-1.5zM48.33 318.99h1.5v1.5h-1.5zM72.95 318.99h1.5v1.5h-1.5zM97.57 318.99h1.5v1.5h-1.5zM122.19 318.99h1.5v1.5h-1.5zM146.81 318.99h1.5v1.5h-1.5zM171.43 318.99h1.5v1.5h-1.5zM196.05 318.99h1.5v1.5h-1.5zM220.67 318.99h1.5v1.5h-1.5zM245.29 318.99h1.5v1.5h-1.5zM269.91 318.99h1.5v1.5h-1.5zM294.53 318.99h1.5v1.5h-1.5zM319.15 318.99h1.5v1.5h-1.5zM343.77 318.99h1.5v1.5h-1.5zM368.39 318.99h1.5v1.5h-1.5zM393.01 318.99h1.5v1.5h-1.5zM417.63 318.99h1.5v1.5h-1.5zM442.25 318.99h1.5v1.5h-1.5zM466.87 318.99h1.5v1.5h-1.5zM491.49 318.99h1.5v1.5h-1.5zM516.11 318.99h1.5v1.5h-1.5zM540.73 318.99h1.5v1.5h-1.5zM565.35 318.99h1.5v1.5h-1.5zM589.97 318.99h1.5v1.5h-1.5zM614.59 318.99h1.5v1.5h-1.5zM639.21 318.99h1.5v1.5h-1.5zM663.83 318.99h1.5v1.5h-1.5zM688.45 318.99h1.5v1.5h-1.5zM713.07 318.99h1.5v1.5h-1.5zM737.69 318.99h1.5v1.5h-1.5zM762.31 318.99h1.5v1.5h-1.5zM786.93 318.99h1.5v1.5h-1.5zM811.55 318.99h1.5v1.5h-1.5zM836.17 318.99h1.5v1.5h-1.5zM860.79 318.99h1.5v1.5h-1.5zM885.41 318.99h1.5v1.5h-1.5zM910.03 318.99h1.5v1.5h-1.5zM934.65 318.99h1.5v1.5h-1.5zM959.27 318.99h1.5v1.5h-1.5zM983.89 318.99h1.5v1.5h-1.5zM1008.51 318.99h1.5v1.5h-1.5zM1033.13 318.99h1.5v1.5h-1.5zM1057.75 318.99h1.5v1.5h-1.5zM1082.37 318.99h1.5v1.5h-1.5zM1106.99 318.99h1.5v1.5h-1.5zM1131.61 318.99h1.5v1.5h-1.5zM1156.23 318.99h1.5v1.5h-1.5zM1180.85 318.99h1.5v1.5h-1.5zM1205.47 318.99h1.5v1.5h-1.5zM1230.09 318.99h1.5v1.5h-1.5zM1254.71 318.99h1.5v1.5h-1.5zM1279.33 318.99h1.5v1.5h-1.5zM1303.95 318.99h1.5v1.5h-1.5zM1328.57 318.99h1.5v1.5h-1.5zM1353.19 318.99h1.5v1.5h-1.5zM1377.81 318.99h1.5v1.5h-1.5zM1402.43 318.99h1.5v1.5h-1.5zM1427.05 318.99h1.5v1.5h-1.5zM1451.67 318.99h1.5v1.5h-1.5zM1476.29 318.99h1.5v1.5h-1.5zM1500.91 318.99h1.5v1.5h-1.5zM1525.53 318.99h1.5v1.5h-1.5zM1550.15 318.99h1.5v1.5h-1.5zM23.71 343.61h1.5v1.5h-1.5zM48.33 343.61h1.5v1.5h-1.5zM72.95 343.61h1.5v1.5h-1.5zM97.57 343.61h1.5v1.5h-1.5zM122.19 343.61h1.5v1.5h-1.5zM146.81 343.61h1.5v1.5h-1.5zM171.43 343.61h1.5v1.5h-1.5zM196.05 343.61h1.5v1.5h-1.5zM220.67 343.61h1.5v1.5h-1.5zM245.29 343.61h1.5v1.5h-1.5zM269.91 343.61h1.5v1.5h-1.5zM294.53 343.61h1.5v1.5h-1.5zM319.15 343.61h1.5v1.5h-1.5zM343.77 343.61h1.5v1.5h-1.5zM368.39 343.61h1.5v1.5h-1.5zM393.01 343.61h1.5v1.5h-1.5zM417.63 343.61h1.5v1.5h-1.5zM442.25 343.61h1.5v1.5h-1.5zM466.87 343.61h1.5v1.5h-1.5zM491.49 343.61h1.5v1.5h-1.5zM516.11 343.61h1.5v1.5h-1.5zM540.73 343.61h1.5v1.5h-1.5zM565.35 343.61h1.5v1.5h-1.5zM589.97 343.61h1.5v1.5h-1.5zM614.59 343.61h1.5v1.5h-1.5zM639.21 343.61h1.5v1.5h-1.5zM663.83 343.61h1.5v1.5h-1.5zM688.45 343.61h1.5v1.5h-1.5zM713.07 343.61h1.5v1.5h-1.5zM737.69 343.61h1.5v1.5h-1.5zM762.31 343.61h1.5v1.5h-1.5zM786.93 343.61h1.5v1.5h-1.5zM811.55 343.61h1.5v1.5h-1.5zM836.17 343.61h1.5v1.5h-1.5zM860.79 343.61h1.5v1.5h-1.5zM885.41 343.61h1.5v1.5h-1.5zM910.03 343.61h1.5v1.5h-1.5zM934.65 343.61h1.5v1.5h-1.5zM959.27 343.61h1.5v1.5h-1.5zM983.89 343.61h1.5v1.5h-1.5zM1008.51 343.61h1.5v1.5h-1.5zM1033.13 343.61h1.5v1.5h-1.5zM1057.75 343.61h1.5v1.5h-1.5zM1082.37 343.61h1.5v1.5h-1.5zM1106.99 343.61h1.5v1.5h-1.5zM1131.61 343.61h1.5v1.5h-1.5zM1156.23 343.61h1.5v1.5h-1.5zM1180.85 343.61h1.5v1.5h-1.5zM1205.47 343.61h1.5v1.5h-1.5zM1230.09 343.61h1.5v1.5h-1.5zM1254.71 343.61h1.5v1.5h-1.5zM1279.33 343.61h1.5v1.5h-1.5zM1303.95 343.61h1.5v1.5h-1.5zM1328.57 343.61h1.5v1.5h-1.5zM1353.19 343.61h1.5v1.5h-1.5zM1377.81 343.61h1.5v1.5h-1.5zM1402.43 343.61h1.5v1.5h-1.5zM1427.05 343.61h1.5v1.5h-1.5zM1451.67 343.61h1.5v1.5h-1.5zM1476.29 343.61h1.5v1.5h-1.5zM1500.91 343.61h1.5v1.5h-1.5zM1525.53 343.61h1.5v1.5h-1.5zM1550.15 343.61h1.5v1.5h-1.5zM23.71 368.23h1.5v1.5h-1.5zM48.33 368.23h1.5v1.5h-1.5zM72.95 368.23h1.5v1.5h-1.5zM97.57 368.23h1.5v1.5h-1.5zM122.19 368.23h1.5v1.5h-1.5zM146.81 368.23h1.5v1.5h-1.5zM171.43 368.23h1.5v1.5h-1.5zM196.05 368.23h1.5v1.5h-1.5zM220.67 368.23h1.5v1.5h-1.5zM245.29 368.23h1.5v1.5h-1.5zM269.91 368.23h1.5v1.5h-1.5zM294.53 368.23h1.5v1.5h-1.5zM319.15 368.23h1.5v1.5h-1.5zM343.77 368.23h1.5v1.5h-1.5zM368.39 368.23h1.5v1.5h-1.5zM393.01 368.23h1.5v1.5h-1.5zM417.63 368.23h1.5v1.5h-1.5zM442.25 368.23h1.5v1.5h-1.5zM466.87 368.23h1.5v1.5h-1.5zM491.49 368.23h1.5v1.5h-1.5zM516.11 368.23h1.5v1.5h-1.5zM540.73 368.23h1.5v1.5h-1.5zM565.35 368.23h1.5v1.5h-1.5zM589.97 368.23h1.5v1.5h-1.5zM614.59 368.23h1.5v1.5h-1.5zM639.21 368.23h1.5v1.5h-1.5zM663.83 368.23h1.5v1.5h-1.5zM688.45 368.23h1.5v1.5h-1.5zM713.07 368.23h1.5v1.5h-1.5zM737.69 368.23h1.5v1.5h-1.5zM762.31 368.23h1.5v1.5h-1.5zM786.93 368.23h1.5v1.5h-1.5zM811.55 368.23h1.5v1.5h-1.5zM836.17 368.23h1.5v1.5h-1.5zM860.79 368.23h1.5v1.5h-1.5zM885.41 368.23h1.5v1.5h-1.5zM910.03 368.23h1.5v1.5h-1.5zM934.65 368.23h1.5v1.5h-1.5zM959.27 368.23h1.5v1.5h-1.5zM983.89 368.23h1.5v1.5h-1.5zM1008.51 368.23h1.5v1.5h-1.5zM1033.13 368.23h1.5v1.5h-1.5zM1057.75 368.23h1.5v1.5h-1.5zM1082.37 368.23h1.5v1.5h-1.5zM1106.99 368.23h1.5v1.5h-1.5zM1131.61 368.23h1.5v1.5h-1.5zM1156.23 368.23h1.5v1.5h-1.5zM1180.85 368.23h1.5v1.5h-1.5zM1205.47 368.23h1.5v1.5h-1.5zM1230.09 368.23h1.5v1.5h-1.5zM1254.71 368.23h1.5v1.5h-1.5zM1279.33 368.23h1.5v1.5h-1.5zM1303.95 368.23h1.5v1.5h-1.5zM1328.57 368.23h1.5v1.5h-1.5zM1353.19 368.23h1.5v1.5h-1.5zM1377.81 368.23h1.5v1.5h-1.5zM1402.43 368.23h1.5v1.5h-1.5zM1427.05 368.23h1.5v1.5h-1.5zM1451.67 368.23h1.5v1.5h-1.5zM1476.29 368.23h1.5v1.5h-1.5zM1500.91 368.23h1.5v1.5h-1.5zM1525.53 368.23h1.5v1.5h-1.5zM1550.15 368.23h1.5v1.5h-1.5zM23.71 392.85h1.5v1.5h-1.5zM48.33 392.85h1.5v1.5h-1.5zM72.95 392.85h1.5v1.5h-1.5zM97.57 392.85h1.5v1.5h-1.5zM122.19 392.85h1.5v1.5h-1.5zM146.81 392.85h1.5v1.5h-1.5zM171.43 392.85h1.5v1.5h-1.5zM196.05 392.85h1.5v1.5h-1.5zM220.67 392.85h1.5v1.5h-1.5zM245.29 392.85h1.5v1.5h-1.5zM269.91 392.85h1.5v1.5h-1.5zM294.53 392.85h1.5v1.5h-1.5zM319.15 392.85h1.5v1.5h-1.5zM343.77 392.85h1.5v1.5h-1.5zM368.39 392.85h1.5v1.5h-1.5zM393.01 392.85h1.5v1.5h-1.5zM417.63 392.85h1.5v1.5h-1.5zM442.25 392.85h1.5v1.5h-1.5zM466.87 392.85h1.5v1.5h-1.5zM491.49 392.85h1.5v1.5h-1.5zM516.11 392.85h1.5v1.5h-1.5zM540.73 392.85h1.5v1.5h-1.5zM565.35 392.85h1.5v1.5h-1.5zM589.97 392.85h1.5v1.5h-1.5zM614.59 392.85h1.5v1.5h-1.5zM639.21 392.85h1.5v1.5h-1.5zM663.83 392.85h1.5v1.5h-1.5zM688.45 392.85h1.5v1.5h-1.5zM713.07 392.85h1.5v1.5h-1.5zM737.69 392.85h1.5v1.5h-1.5zM762.31 392.85h1.5v1.5h-1.5zM786.93 392.85h1.5v1.5h-1.5zM811.55 392.85h1.5v1.5h-1.5zM836.17 392.85h1.5v1.5h-1.5zM860.79 392.85h1.5v1.5h-1.5zM885.41 392.85h1.5v1.5h-1.5zM910.03 392.85h1.5v1.5h-1.5zM934.65 392.85h1.5v1.5h-1.5zM959.27 392.85h1.5v1.5h-1.5zM983.89 392.85h1.5v1.5h-1.5zM1008.51 392.85h1.5v1.5h-1.5zM1033.13 392.85h1.5v1.5h-1.5zM1057.75 392.85h1.5v1.5h-1.5zM1082.37 392.85h1.5v1.5h-1.5zM1106.99 392.85h1.5v1.5h-1.5zM1131.61 392.85h1.5v1.5h-1.5zM1156.23 392.85h1.5v1.5h-1.5zM1180.85 392.85h1.5v1.5h-1.5zM1205.47 392.85h1.5v1.5h-1.5zM1230.09 392.85h1.5v1.5h-1.5zM1254.71 392.85h1.5v1.5h-1.5zM1279.33 392.85h1.5v1.5h-1.5zM1303.95 392.85h1.5v1.5h-1.5zM1328.57 392.85h1.5v1.5h-1.5zM1353.19 392.85h1.5v1.5h-1.5zM1377.81 392.85h1.5v1.5h-1.5zM1402.43 392.85h1.5v1.5h-1.5zM1427.05 392.85h1.5v1.5h-1.5zM1451.67 392.85h1.5v1.5h-1.5zM1476.29 392.85h1.5v1.5h-1.5zM1500.91 392.85h1.5v1.5h-1.5zM1525.53 392.85h1.5v1.5h-1.5zM1550.15 392.85h1.5v1.5h-1.5zM23.71 417.47h1.5v1.5h-1.5zM48.33 417.47h1.5v1.5h-1.5zM72.95 417.47h1.5v1.5h-1.5zM97.57 417.47h1.5v1.5h-1.5zM122.19 417.47h1.5v1.5h-1.5zM146.81 417.47h1.5v1.5h-1.5zM171.43 417.47h1.5v1.5h-1.5zM196.05 417.47h1.5v1.5h-1.5zM220.67 417.47h1.5v1.5h-1.5zM245.29 417.47h1.5v1.5h-1.5zM269.91 417.47h1.5v1.5h-1.5zM294.53 417.47h1.5v1.5h-1.5zM319.15 417.47h1.5v1.5h-1.5zM343.77 417.47h1.5v1.5h-1.5zM368.39 417.47h1.5v1.5h-1.5zM393.01 417.47h1.5v1.5h-1.5zM417.63 417.47h1.5v1.5h-1.5zM442.25 417.47h1.5v1.5h-1.5zM466.87 417.47h1.5v1.5h-1.5zM491.49 417.47h1.5v1.5h-1.5zM516.11 417.47h1.5v1.5h-1.5zM540.73 417.47h1.5v1.5h-1.5zM565.35 417.47h1.5v1.5h-1.5zM589.97 417.47h1.5v1.5h-1.5zM614.59 417.47h1.5v1.5h-1.5zM639.21 417.47h1.5v1.5h-1.5zM663.83 417.47h1.5v1.5h-1.5zM688.45 417.47h1.5v1.5h-1.5zM713.07 417.47h1.5v1.5h-1.5zM737.69 417.47h1.5v1.5h-1.5zM762.31 417.47h1.5v1.5h-1.5zM786.93 417.47h1.5v1.5h-1.5zM811.55 417.47h1.5v1.5h-1.5zM836.17 417.47h1.5v1.5h-1.5zM860.79 417.47h1.5v1.5h-1.5zM885.41 417.47h1.5v1.5h-1.5zM910.03 417.47h1.5v1.5h-1.5zM934.65 417.47h1.5v1.5h-1.5zM959.27 417.47h1.5v1.5h-1.5zM983.89 417.47h1.5v1.5h-1.5zM1008.51 417.47h1.5v1.5h-1.5zM1033.13 417.47h1.5v1.5h-1.5zM1057.75 417.47h1.5v1.5h-1.5zM1082.37 417.47h1.5v1.5h-1.5zM1106.99 417.47h1.5v1.5h-1.5zM1131.61 417.47h1.5v1.5h-1.5zM1156.23 417.47h1.5v1.5h-1.5zM1180.85 417.47h1.5v1.5h-1.5zM1205.47 417.47h1.5v1.5h-1.5zM1230.09 417.47h1.5v1.5h-1.5zM1254.71 417.47h1.5v1.5h-1.5zM1279.33 417.47h1.5v1.5h-1.5zM1303.95 417.47h1.5v1.5h-1.5zM1328.57 417.47h1.5v1.5h-1.5zM1353.19 417.47h1.5v1.5h-1.5zM1377.81 417.47h1.5v1.5h-1.5zM1402.43 417.47h1.5v1.5h-1.5zM1427.05 417.47h1.5v1.5h-1.5zM1451.67 417.47h1.5v1.5h-1.5zM1476.29 417.47h1.5v1.5h-1.5zM1500.91 417.47h1.5v1.5h-1.5zM1525.53 417.47h1.5v1.5h-1.5zM1550.15 417.47h1.5v1.5h-1.5zM23.71 442.09h1.5v1.5h-1.5zM48.33 442.09h1.5v1.5h-1.5zM72.95 442.09h1.5v1.5h-1.5zM97.57 442.09h1.5v1.5h-1.5zM122.19 442.09h1.5v1.5h-1.5zM146.81 442.09h1.5v1.5h-1.5zM171.43 442.09h1.5v1.5h-1.5zM196.05 442.09h1.5v1.5h-1.5zM220.67 442.09h1.5v1.5h-1.5zM245.29 442.09h1.5v1.5h-1.5zM269.91 442.09h1.5v1.5h-1.5zM294.53 442.09h1.5v1.5h-1.5zM319.15 442.09h1.5v1.5h-1.5zM343.77 442.09h1.5v1.5h-1.5zM368.39 442.09h1.5v1.5h-1.5zM393.01 442.09h1.5v1.5h-1.5zM417.63 442.09h1.5v1.5h-1.5zM442.25 442.09h1.5v1.5h-1.5zM466.87 442.09h1.5v1.5h-1.5zM491.49 442.09h1.5v1.5h-1.5zM516.11 442.09h1.5v1.5h-1.5zM540.73 442.09h1.5v1.5h-1.5zM565.35 442.09h1.5v1.5h-1.5zM589.97 442.09h1.5v1.5h-1.5zM614.59 442.09h1.5v1.5h-1.5zM639.21 442.09h1.5v1.5h-1.5zM663.83 442.09h1.5v1.5h-1.5zM688.45 442.09h1.5v1.5h-1.5zM713.07 442.09h1.5v1.5h-1.5zM737.69 442.09h1.5v1.5h-1.5zM762.31 442.09h1.5v1.5h-1.5zM786.93 442.09h1.5v1.5h-1.5zM811.55 442.09h1.5v1.5h-1.5zM836.17 442.09h1.5v1.5h-1.5zM860.79 442.09h1.5v1.5h-1.5zM885.41 442.09h1.5v1.5h-1.5zM910.03 442.09h1.5v1.5h-1.5zM934.65 442.09h1.5v1.5h-1.5zM959.27 442.09h1.5v1.5h-1.5zM983.89 442.09h1.5v1.5h-1.5zM1008.51 442.09h1.5v1.5h-1.5zM1033.13 442.09h1.5v1.5h-1.5zM1057.75 442.09h1.5v1.5h-1.5zM1082.37 442.09h1.5v1.5h-1.5zM1106.99 442.09h1.5v1.5h-1.5zM1131.61 442.09h1.5v1.5h-1.5zM1156.23 442.09h1.5v1.5h-1.5zM1180.85 442.09h1.5v1.5h-1.5zM1205.47 442.09h1.5v1.5h-1.5zM1230.09 442.09h1.5v1.5h-1.5zM1254.71 442.09h1.5v1.5h-1.5zM1279.33 442.09h1.5v1.5h-1.5zM1303.95 442.09h1.5v1.5h-1.5zM1328.57 442.09h1.5v1.5h-1.5zM1353.19 442.09h1.5v1.5h-1.5zM1377.81 442.09h1.5v1.5h-1.5zM1402.43 442.09h1.5v1.5h-1.5zM1427.05 442.09h1.5v1.5h-1.5zM1451.67 442.09h1.5v1.5h-1.5zM1476.29 442.09h1.5v1.5h-1.5zM1500.91 442.09h1.5v1.5h-1.5zM1525.53 442.09h1.5v1.5h-1.5zM1550.15 442.09h1.5v1.5h-1.5zM23.71 466.71h1.5v1.5h-1.5zM48.33 466.71h1.5v1.5h-1.5zM72.95 466.71h1.5v1.5h-1.5zM97.57 466.71h1.5v1.5h-1.5zM122.19 466.71h1.5v1.5h-1.5zM146.81 466.71h1.5v1.5h-1.5zM171.43 466.71h1.5v1.5h-1.5zM196.05 466.71h1.5v1.5h-1.5zM220.67 466.71h1.5v1.5h-1.5zM245.29 466.71h1.5v1.5h-1.5zM269.91 466.71h1.5v1.5h-1.5zM294.53 466.71h1.5v1.5h-1.5zM319.15 466.71h1.5v1.5h-1.5zM343.77 466.71h1.5v1.5h-1.5zM368.39 466.71h1.5v1.5h-1.5zM393.01 466.71h1.5v1.5h-1.5zM417.63 466.71h1.5v1.5h-1.5zM442.25 466.71h1.5v1.5h-1.5zM466.87 466.71h1.5v1.5h-1.5zM491.49 466.71h1.5v1.5h-1.5zM516.11 466.71h1.5v1.5h-1.5zM540.73 466.71h1.5v1.5h-1.5zM565.35 466.71h1.5v1.5h-1.5zM589.97 466.71h1.5v1.5h-1.5zM614.59 466.71h1.5v1.5h-1.5zM639.21 466.71h1.5v1.5h-1.5zM663.83 466.71h1.5v1.5h-1.5zM688.45 466.71h1.5v1.5h-1.5zM713.07 466.71h1.5v1.5h-1.5zM737.69 466.71h1.5v1.5h-1.5zM762.31 466.71h1.5v1.5h-1.5zM786.93 466.71h1.5v1.5h-1.5zM811.55 466.71h1.5v1.5h-1.5zM836.17 466.71h1.5v1.5h-1.5zM860.79 466.71h1.5v1.5h-1.5zM885.41 466.71h1.5v1.5h-1.5zM910.03 466.71h1.5v1.5h-1.5zM934.65 466.71h1.5v1.5h-1.5zM959.27 466.71h1.5v1.5h-1.5zM983.89 466.71h1.5v1.5h-1.5zM1008.51 466.71h1.5v1.5h-1.5zM1033.13 466.71h1.5v1.5h-1.5zM1057.75 466.71h1.5v1.5h-1.5zM1082.37 466.71h1.5v1.5h-1.5zM1106.99 466.71h1.5v1.5h-1.5zM1131.61 466.71h1.5v1.5h-1.5zM1156.23 466.71h1.5v1.5h-1.5zM1180.85 466.71h1.5v1.5h-1.5zM1205.47 466.71h1.5v1.5h-1.5zM1230.09 466.71h1.5v1.5h-1.5zM1254.71 466.71h1.5v1.5h-1.5zM1279.33 466.71h1.5v1.5h-1.5zM1303.95 466.71h1.5v1.5h-1.5zM1328.57 466.71h1.5v1.5h-1.5zM1353.19 466.71h1.5v1.5h-1.5zM1377.81 466.71h1.5v1.5h-1.5zM1402.43 466.71h1.5v1.5h-1.5zM1427.05 466.71h1.5v1.5h-1.5zM1451.67 466.71h1.5v1.5h-1.5zM1476.29 466.71h1.5v1.5h-1.5zM1500.91 466.71h1.5v1.5h-1.5zM1525.53 466.71h1.5v1.5h-1.5zM1550.15 466.71h1.5v1.5h-1.5zM23.71 491.33h1.5v1.5h-1.5zM48.33 491.33h1.5v1.5h-1.5zM72.95 491.33h1.5v1.5h-1.5zM97.57 491.33h1.5v1.5h-1.5zM122.19 491.33h1.5v1.5h-1.5zM146.81 491.33h1.5v1.5h-1.5zM171.43 491.33h1.5v1.5h-1.5zM196.05 491.33h1.5v1.5h-1.5zM220.67 491.33h1.5v1.5h-1.5zM245.29 491.33h1.5v1.5h-1.5zM269.91 491.33h1.5v1.5h-1.5zM294.53 491.33h1.5v1.5h-1.5zM319.15 491.33h1.5v1.5h-1.5zM343.77 491.33h1.5v1.5h-1.5zM368.39 491.33h1.5v1.5h-1.5zM393.01 491.33h1.5v1.5h-1.5zM417.63 491.33h1.5v1.5h-1.5zM442.25 491.33h1.5v1.5h-1.5zM466.87 491.33h1.5v1.5h-1.5zM491.49 491.33h1.5v1.5h-1.5zM516.11 491.33h1.5v1.5h-1.5zM540.73 491.33h1.5v1.5h-1.5zM565.35 491.33h1.5v1.5h-1.5zM589.97 491.33h1.5v1.5h-1.5zM614.59 491.33h1.5v1.5h-1.5zM639.21 491.33h1.5v1.5h-1.5zM663.83 491.33h1.5v1.5h-1.5zM688.45 491.33h1.5v1.5h-1.5zM713.07 491.33h1.5v1.5h-1.5zM737.69 491.33h1.5v1.5h-1.5zM762.31 491.33h1.5v1.5h-1.5zM786.93 491.33h1.5v1.5h-1.5zM811.55 491.33h1.5v1.5h-1.5zM836.17 491.33h1.5v1.5h-1.5zM860.79 491.33h1.5v1.5h-1.5zM885.41 491.33h1.5v1.5h-1.5zM910.03 491.33h1.5v1.5h-1.5zM934.65 491.33h1.5v1.5h-1.5zM959.27 491.33h1.5v1.5h-1.5zM983.89 491.33h1.5v1.5h-1.5zM1008.51 491.33h1.5v1.5h-1.5zM1033.13 491.33h1.5v1.5h-1.5zM1057.75 491.33h1.5v1.5h-1.5zM1082.37 491.33h1.5v1.5h-1.5zM1106.99 491.33h1.5v1.5h-1.5zM1131.61 491.33h1.5v1.5h-1.5zM1156.23 491.33h1.5v1.5h-1.5zM1180.85 491.33h1.5v1.5h-1.5zM1205.47 491.33h1.5v1.5h-1.5zM1230.09 491.33h1.5v1.5h-1.5zM1254.71 491.33h1.5v1.5h-1.5zM1279.33 491.33h1.5v1.5h-1.5zM1303.95 491.33h1.5v1.5h-1.5zM1328.57 491.33h1.5v1.5h-1.5zM1353.19 491.33h1.5v1.5h-1.5zM1377.81 491.33h1.5v1.5h-1.5zM1402.43 491.33h1.5v1.5h-1.5zM1427.05 491.33h1.5v1.5h-1.5zM1451.67 491.33h1.5v1.5h-1.5zM1476.29 491.33h1.5v1.5h-1.5zM1500.91 491.33h1.5v1.5h-1.5zM1525.53 491.33h1.5v1.5h-1.5zM1550.15 491.33h1.5v1.5h-1.5zM23.71 515.95h1.5v1.5h-1.5zM48.33 515.95h1.5v1.5h-1.5zM72.95 515.95h1.5v1.5h-1.5zM97.57 515.95h1.5v1.5h-1.5zM122.19 515.95h1.5v1.5h-1.5zM146.81 515.95h1.5v1.5h-1.5zM171.43 515.95h1.5v1.5h-1.5zM196.05 515.95h1.5v1.5h-1.5zM220.67 515.95h1.5v1.5h-1.5zM245.29 515.95h1.5v1.5h-1.5zM269.91 515.95h1.5v1.5h-1.5zM294.53 515.95h1.5v1.5h-1.5zM319.15 515.95h1.5v1.5h-1.5zM343.77 515.95h1.5v1.5h-1.5zM368.39 515.95h1.5v1.5h-1.5zM393.01 515.95h1.5v1.5h-1.5zM417.63 515.95h1.5v1.5h-1.5zM442.25 515.95h1.5v1.5h-1.5zM466.87 515.95h1.5v1.5h-1.5zM491.49 515.95h1.5v1.5h-1.5zM516.11 515.95h1.5v1.5h-1.5zM540.73 515.95h1.5v1.5h-1.5zM565.35 515.95h1.5v1.5h-1.5zM589.97 515.95h1.5v1.5h-1.5zM614.59 515.95h1.5v1.5h-1.5zM639.21 515.95h1.5v1.5h-1.5zM663.83 515.95h1.5v1.5h-1.5zM688.45 515.95h1.5v1.5h-1.5zM713.07 515.95h1.5v1.5h-1.5zM737.69 515.95h1.5v1.5h-1.5zM762.31 515.95h1.5v1.5h-1.5zM786.93 515.95h1.5v1.5h-1.5zM811.55 515.95h1.5v1.5h-1.5zM836.17 515.95h1.5v1.5h-1.5zM860.79 515.95h1.5v1.5h-1.5zM885.41 515.95h1.5v1.5h-1.5zM910.03 515.95h1.5v1.5h-1.5zM934.65 515.95h1.5v1.5h-1.5zM959.27 515.95h1.5v1.5h-1.5zM983.89 515.95h1.5v1.5h-1.5zM1008.51 515.95h1.5v1.5h-1.5zM1033.13 515.95h1.5v1.5h-1.5zM1057.75 515.95h1.5v1.5h-1.5zM1082.37 515.95h1.5v1.5h-1.5zM1106.99 515.95h1.5v1.5h-1.5zM1131.61 515.95h1.5v1.5h-1.5zM1156.23 515.95h1.5v1.5h-1.5zM1180.85 515.95h1.5v1.5h-1.5zM1205.47 515.95h1.5v1.5h-1.5zM1230.09 515.95h1.5v1.5h-1.5zM1254.71 515.95h1.5v1.5h-1.5zM1279.33 515.95h1.5v1.5h-1.5zM1303.95 515.95h1.5v1.5h-1.5zM1328.57 515.95h1.5v1.5h-1.5zM1353.19 515.95h1.5v1.5h-1.5zM1377.81 515.95h1.5v1.5h-1.5zM1402.43 515.95h1.5v1.5h-1.5zM1427.05 515.95h1.5v1.5h-1.5zM1451.67 515.95h1.5v1.5h-1.5zM1476.29 515.95h1.5v1.5h-1.5zM1500.91 515.95h1.5v1.5h-1.5zM1525.53 515.95h1.5v1.5h-1.5zM1550.15 515.95h1.5v1.5h-1.5zM23.71 540.57h1.5v1.5h-1.5zM48.33 540.57h1.5v1.5h-1.5zM72.95 540.57h1.5v1.5h-1.5zM97.57 540.57h1.5v1.5h-1.5zM122.19 540.57h1.5v1.5h-1.5zM146.81 540.57h1.5v1.5h-1.5zM171.43 540.57h1.5v1.5h-1.5zM196.05 540.57h1.5v1.5h-1.5zM220.67 540.57h1.5v1.5h-1.5zM245.29 540.57h1.5v1.5h-1.5zM269.91 540.57h1.5v1.5h-1.5zM294.53 540.57h1.5v1.5h-1.5zM319.15 540.57h1.5v1.5h-1.5zM343.77 540.57h1.5v1.5h-1.5zM368.39 540.57h1.5v1.5h-1.5zM393.01 540.57h1.5v1.5h-1.5zM417.63 540.57h1.5v1.5h-1.5zM442.25 540.57h1.5v1.5h-1.5zM466.87 540.57h1.5v1.5h-1.5zM491.49 540.57h1.5v1.5h-1.5zM516.11 540.57h1.5v1.5h-1.5zM540.73 540.57h1.5v1.5h-1.5zM565.35 540.57h1.5v1.5h-1.5zM589.97 540.57h1.5v1.5h-1.5zM614.59 540.57h1.5v1.5h-1.5zM639.21 540.57h1.5v1.5h-1.5zM663.83 540.57h1.5v1.5h-1.5zM688.45 540.57h1.5v1.5h-1.5zM713.07 540.57h1.5v1.5h-1.5zM737.69 540.57h1.5v1.5h-1.5zM762.31 540.57h1.5v1.5h-1.5zM786.93 540.57h1.5v1.5h-1.5zM811.55 540.57h1.5v1.5h-1.5zM836.17 540.57h1.5v1.5h-1.5zM860.79 540.57h1.5v1.5h-1.5zM885.41 540.57h1.5v1.5h-1.5zM910.03 540.57h1.5v1.5h-1.5zM934.65 540.57h1.5v1.5h-1.5zM959.27 540.57h1.5v1.5h-1.5zM983.89 540.57h1.5v1.5h-1.5zM1008.51 540.57h1.5v1.5h-1.5zM1033.13 540.57h1.5v1.5h-1.5zM1057.75 540.57h1.5v1.5h-1.5zM1082.37 540.57h1.5v1.5h-1.5zM1106.99 540.57h1.5v1.5h-1.5zM1131.61 540.57h1.5v1.5h-1.5zM1156.23 540.57h1.5v1.5h-1.5zM1180.85 540.57h1.5v1.5h-1.5zM1205.47 540.57h1.5v1.5h-1.5zM1230.09 540.57h1.5v1.5h-1.5zM1254.71 540.57h1.5v1.5h-1.5zM1279.33 540.57h1.5v1.5h-1.5zM1303.95 540.57h1.5v1.5h-1.5zM1328.57 540.57h1.5v1.5h-1.5zM1353.19 540.57h1.5v1.5h-1.5zM1377.81 540.57h1.5v1.5h-1.5zM1402.43 540.57h1.5v1.5h-1.5zM1427.05 540.57h1.5v1.5h-1.5zM1451.67 540.57h1.5v1.5h-1.5zM1476.29 540.57h1.5v1.5h-1.5zM1500.91 540.57h1.5v1.5h-1.5zM1525.53 540.57h1.5v1.5h-1.5zM1550.15 540.57h1.5v1.5h-1.5zM23.71 565.19h1.5v1.5h-1.5zM48.33 565.19h1.5v1.5h-1.5zM72.95 565.19h1.5v1.5h-1.5zM97.57 565.19h1.5v1.5h-1.5zM122.19 565.19h1.5v1.5h-1.5zM146.81 565.19h1.5v1.5h-1.5zM171.43 565.19h1.5v1.5h-1.5zM196.05 565.19h1.5v1.5h-1.5zM220.67 565.19h1.5v1.5h-1.5zM245.29 565.19h1.5v1.5h-1.5zM269.91 565.19h1.5v1.5h-1.5zM294.53 565.19h1.5v1.5h-1.5zM319.15 565.19h1.5v1.5h-1.5zM343.77 565.19h1.5v1.5h-1.5zM368.39 565.19h1.5v1.5h-1.5zM393.01 565.19h1.5v1.5h-1.5zM417.63 565.19h1.5v1.5h-1.5zM442.25 565.19h1.5v1.5h-1.5zM466.87 565.19h1.5v1.5h-1.5zM491.49 565.19h1.5v1.5h-1.5zM516.11 565.19h1.5v1.5h-1.5zM540.73 565.19h1.5v1.5h-1.5zM565.35 565.19h1.5v1.5h-1.5zM589.97 565.19h1.5v1.5h-1.5zM614.59 565.19h1.5v1.5h-1.5zM639.21 565.19h1.5v1.5h-1.5zM663.83 565.19h1.5v1.5h-1.5zM688.45 565.19h1.5v1.5h-1.5zM713.07 565.19h1.5v1.5h-1.5zM737.69 565.19h1.5v1.5h-1.5zM762.31 565.19h1.5v1.5h-1.5zM786.93 565.19h1.5v1.5h-1.5zM811.55 565.19h1.5v1.5h-1.5zM836.17 565.19h1.5v1.5h-1.5zM860.79 565.19h1.5v1.5h-1.5zM885.41 565.19h1.5v1.5h-1.5zM910.03 565.19h1.5v1.5h-1.5zM934.65 565.19h1.5v1.5h-1.5zM959.27 565.19h1.5v1.5h-1.5zM983.89 565.19h1.5v1.5h-1.5zM1008.51 565.19h1.5v1.5h-1.5zM1033.13 565.19h1.5v1.5h-1.5zM1057.75 565.19h1.5v1.5h-1.5zM1082.37 565.19h1.5v1.5h-1.5zM1106.99 565.19h1.5v1.5h-1.5zM1131.61 565.19h1.5v1.5h-1.5zM1156.23 565.19h1.5v1.5h-1.5zM1180.85 565.19h1.5v1.5h-1.5zM1205.47 565.19h1.5v1.5h-1.5zM1230.09 565.19h1.5v1.5h-1.5zM1254.71 565.19h1.5v1.5h-1.5zM1279.33 565.19h1.5v1.5h-1.5zM1303.95 565.19h1.5v1.5h-1.5zM1328.57 565.19h1.5v1.5h-1.5zM1353.19 565.19h1.5v1.5h-1.5zM1377.81 565.19h1.5v1.5h-1.5zM1402.43 565.19h1.5v1.5h-1.5zM1427.05 565.19h1.5v1.5h-1.5zM1451.67 565.19h1.5v1.5h-1.5zM1476.29 565.19h1.5v1.5h-1.5zM1500.91 565.19h1.5v1.5h-1.5zM1525.53 565.19h1.5v1.5h-1.5zM1550.15 565.19h1.5v1.5h-1.5zM23.71 589.81h1.5v1.5h-1.5zM48.33 589.81h1.5v1.5h-1.5zM72.95 589.81h1.5v1.5h-1.5zM97.57 589.81h1.5v1.5h-1.5zM122.19 589.81h1.5v1.5h-1.5zM146.81 589.81h1.5v1.5h-1.5zM171.43 589.81h1.5v1.5h-1.5zM196.05 589.81h1.5v1.5h-1.5zM220.67 589.81h1.5v1.5h-1.5zM245.29 589.81h1.5v1.5h-1.5zM269.91 589.81h1.5v1.5h-1.5zM294.53 589.81h1.5v1.5h-1.5zM319.15 589.81h1.5v1.5h-1.5zM343.77 589.81h1.5v1.5h-1.5zM368.39 589.81h1.5v1.5h-1.5zM393.01 589.81h1.5v1.5h-1.5zM417.63 589.81h1.5v1.5h-1.5zM442.25 589.81h1.5v1.5h-1.5zM466.87 589.81h1.5v1.5h-1.5zM491.49 589.81h1.5v1.5h-1.5zM516.11 589.81h1.5v1.5h-1.5zM540.73 589.81h1.5v1.5h-1.5zM565.35 589.81h1.5v1.5h-1.5zM589.97 589.81h1.5v1.5h-1.5zM614.59 589.81h1.5v1.5h-1.5zM639.21 589.81h1.5v1.5h-1.5zM663.83 589.81h1.5v1.5h-1.5zM688.45 589.81h1.5v1.5h-1.5zM713.07 589.81h1.5v1.5h-1.5zM737.69 589.81h1.5v1.5h-1.5zM762.31 589.81h1.5v1.5h-1.5zM786.93 589.81h1.5v1.5h-1.5zM811.55 589.81h1.5v1.5h-1.5zM836.17 589.81h1.5v1.5h-1.5zM860.79 589.81h1.5v1.5h-1.5zM885.41 589.81h1.5v1.5h-1.5zM910.03 589.81h1.5v1.5h-1.5zM934.65 589.81h1.5v1.5h-1.5zM959.27 589.81h1.5v1.5h-1.5zM983.89 589.81h1.5v1.5h-1.5zM1008.51 589.81h1.5v1.5h-1.5zM1033.13 589.81h1.5v1.5h-1.5zM1057.75 589.81h1.5v1.5h-1.5zM1082.37 589.81h1.5v1.5h-1.5zM1106.99 589.81h1.5v1.5h-1.5zM1131.61 589.81h1.5v1.5h-1.5zM1156.23 589.81h1.5v1.5h-1.5zM1180.85 589.81h1.5v1.5h-1.5zM1205.47 589.81h1.5v1.5h-1.5zM1230.09 589.81h1.5v1.5h-1.5zM1254.71 589.81h1.5v1.5h-1.5zM1279.33 589.81h1.5v1.5h-1.5zM1303.95 589.81h1.5v1.5h-1.5zM1328.57 589.81h1.5v1.5h-1.5zM1353.19 589.81h1.5v1.5h-1.5zM1377.81 589.81h1.5v1.5h-1.5zM1402.43 589.81h1.5v1.5h-1.5zM1427.05 589.81h1.5v1.5h-1.5zM1451.67 589.81h1.5v1.5h-1.5zM1476.29 589.81h1.5v1.5h-1.5zM1500.91 589.81h1.5v1.5h-1.5zM1525.53 589.81h1.5v1.5h-1.5zM1550.15 589.81h1.5v1.5h-1.5zM23.71 614.43h1.5v1.5h-1.5zM48.33 614.43h1.5v1.5h-1.5zM72.95 614.43h1.5v1.5h-1.5zM97.57 614.43h1.5v1.5h-1.5zM122.19 614.43h1.5v1.5h-1.5zM146.81 614.43h1.5v1.5h-1.5zM171.43 614.43h1.5v1.5h-1.5zM196.05 614.43h1.5v1.5h-1.5zM220.67 614.43h1.5v1.5h-1.5zM245.29 614.43h1.5v1.5h-1.5zM269.91 614.43h1.5v1.5h-1.5zM294.53 614.43h1.5v1.5h-1.5zM319.15 614.43h1.5v1.5h-1.5zM343.77 614.43h1.5v1.5h-1.5zM368.39 614.43h1.5v1.5h-1.5zM393.01 614.43h1.5v1.5h-1.5zM417.63 614.43h1.5v1.5h-1.5zM442.25 614.43h1.5v1.5h-1.5zM466.87 614.43h1.5v1.5h-1.5zM491.49 614.43h1.5v1.5h-1.5zM516.11 614.43h1.5v1.5h-1.5zM540.73 614.43h1.5v1.5h-1.5zM565.35 614.43h1.5v1.5h-1.5zM589.97 614.43h1.5v1.5h-1.5zM614.59 614.43h1.5v1.5h-1.5zM639.21 614.43h1.5v1.5h-1.5zM663.83 614.43h1.5v1.5h-1.5zM688.45 614.43h1.5v1.5h-1.5zM713.07 614.43h1.5v1.5h-1.5zM737.69 614.43h1.5v1.5h-1.5zM762.31 614.43h1.5v1.5h-1.5zM786.93 614.43h1.5v1.5h-1.5zM811.55 614.43h1.5v1.5h-1.5zM836.17 614.43h1.5v1.5h-1.5zM860.79 614.43h1.5v1.5h-1.5zM885.41 614.43h1.5v1.5h-1.5zM910.03 614.43h1.5v1.5h-1.5zM934.65 614.43h1.5v1.5h-1.5zM959.27 614.43h1.5v1.5h-1.5zM983.89 614.43h1.5v1.5h-1.5zM1008.51 614.43h1.5v1.5h-1.5zM1033.13 614.43h1.5v1.5h-1.5zM1057.75 614.43h1.5v1.5h-1.5zM1082.37 614.43h1.5v1.5h-1.5zM1106.99 614.43h1.5v1.5h-1.5zM1131.61 614.43h1.5v1.5h-1.5zM1156.23 614.43h1.5v1.5h-1.5zM1180.85 614.43h1.5v1.5h-1.5zM1205.47 614.43h1.5v1.5h-1.5zM1230.09 614.43h1.5v1.5h-1.5zM1254.71 614.43h1.5v1.5h-1.5zM1279.33 614.43h1.5v1.5h-1.5zM1303.95 614.43h1.5v1.5h-1.5zM1328.57 614.43h1.5v1.5h-1.5zM1353.19 614.43h1.5v1.5h-1.5zM1377.81 614.43h1.5v1.5h-1.5zM1402.43 614.43h1.5v1.5h-1.5zM1427.05 614.43h1.5v1.5h-1.5zM1451.67 614.43h1.5v1.5h-1.5zM1476.29 614.43h1.5v1.5h-1.5zM1500.91 614.43h1.5v1.5h-1.5zM1525.53 614.43h1.5v1.5h-1.5zM1550.15 614.43h1.5v1.5h-1.5zM23.71 639.05h1.5v1.5h-1.5zM48.33 639.05h1.5v1.5h-1.5zM72.95 639.05h1.5v1.5h-1.5zM97.57 639.05h1.5v1.5h-1.5zM122.19 639.05h1.5v1.5h-1.5zM146.81 639.05h1.5v1.5h-1.5zM171.43 639.05h1.5v1.5h-1.5zM196.05 639.05h1.5v1.5h-1.5zM220.67 639.05h1.5v1.5h-1.5zM245.29 639.05h1.5v1.5h-1.5zM269.91 639.05h1.5v1.5h-1.5zM294.53 639.05h1.5v1.5h-1.5zM319.15 639.05h1.5v1.5h-1.5zM343.77 639.05h1.5v1.5h-1.5zM368.39 639.05h1.5v1.5h-1.5zM393.01 639.05h1.5v1.5h-1.5zM417.63 639.05h1.5v1.5h-1.5zM442.25 639.05h1.5v1.5h-1.5zM466.87 639.05h1.5v1.5h-1.5zM491.49 639.05h1.5v1.5h-1.5zM516.11 639.05h1.5v1.5h-1.5zM540.73 639.05h1.5v1.5h-1.5zM565.35 639.05h1.5v1.5h-1.5zM589.97 639.05h1.5v1.5h-1.5zM614.59 639.05h1.5v1.5h-1.5zM639.21 639.05h1.5v1.5h-1.5zM663.83 639.05h1.5v1.5h-1.5zM688.45 639.05h1.5v1.5h-1.5zM713.07 639.05h1.5v1.5h-1.5zM737.69 639.05h1.5v1.5h-1.5zM762.31 639.05h1.5v1.5h-1.5zM786.93 639.05h1.5v1.5h-1.5zM811.55 639.05h1.5v1.5h-1.5zM836.17 639.05h1.5v1.5h-1.5zM860.79 639.05h1.5v1.5h-1.5zM885.41 639.05h1.5v1.5h-1.5zM910.03 639.05h1.5v1.5h-1.5zM934.65 639.05h1.5v1.5h-1.5zM959.27 639.05h1.5v1.5h-1.5zM983.89 639.05h1.5v1.5h-1.5zM1008.51 639.05h1.5v1.5h-1.5zM1033.13 639.05h1.5v1.5h-1.5zM1057.75 639.05h1.5v1.5h-1.5zM1082.37 639.05h1.5v1.5h-1.5zM1106.99 639.05h1.5v1.5h-1.5zM1131.61 639.05h1.5v1.5h-1.5zM1156.23 639.05h1.5v1.5h-1.5zM1180.85 639.05h1.5v1.5h-1.5zM1205.47 639.05h1.5v1.5h-1.5zM1230.09 639.05h1.5v1.5h-1.5zM1254.71 639.05h1.5v1.5h-1.5zM1279.33 639.05h1.5v1.5h-1.5zM1303.95 639.05h1.5v1.5h-1.5zM1328.57 639.05h1.5v1.5h-1.5zM1353.19 639.05h1.5v1.5h-1.5zM1377.81 639.05h1.5v1.5h-1.5zM1402.43 639.05h1.5v1.5h-1.5zM1427.05 639.05h1.5v1.5h-1.5zM1451.67 639.05h1.5v1.5h-1.5zM1476.29 639.05h1.5v1.5h-1.5zM1500.91 639.05h1.5v1.5h-1.5zM1525.53 639.05h1.5v1.5h-1.5zM1550.15 639.05h1.5v1.5h-1.5z"/></svg>
<div class="a" style="left:4px;top:767px;width:2082px;height:1px;background:#d9d9d9"></div>
<svg class="a" style="left:44.9px;top:134.5px" width="26" height="26" viewBox="0 0 26 26"><rect x="0" y="0" width="26" height="26" rx="3.6" fill="#232323"/><g fill="#ffffff"><rect x="2.8" y="2.7" width="20.4" height="6.2"/><rect x="2.8" y="11.3" width="4.4" height="5"/><rect x="9.8" y="11.3" width="6.5" height="5"/><rect x="18.7" y="11.3" width="4.5" height="5"/><rect x="2.8" y="18.6" width="4.4" height="4.8"/><rect x="9.8" y="18.6" width="6.5" height="4.8"/><rect x="18.7" y="18.6" width="4.5" height="4.8"/></g></svg>
<svg class="a" style="left:340px;top:140px" width="15" height="15" viewBox="0 0 15 15"><path d="M7.5 0.2V14.8M0.2 7.5H14.8" stroke="#3c2ec6" stroke-width="2" fill="none"/></svg>
<div class="a" style="left:39px;top:198.4px;width:453px;height:53.5px;border:2px solid #c6c6c6;border-radius:4px;background:#fff"></div>
<svg class="a" style="left:44.9px;top:301.0px" width="26" height="26" viewBox="0 0 26 26"><rect x="0" y="0" width="26" height="26" rx="3.6" fill="#6f6f6f"/><g fill="#ffffff"><rect x="2.8" y="2.7" width="20.4" height="6.2"/><rect x="2.8" y="11.3" width="4.4" height="5"/><rect x="9.8" y="11.3" width="6.5" height="5"/><rect x="18.7" y="11.3" width="4.5" height="5"/><rect x="2.8" y="18.6" width="4.4" height="4.8"/><rect x="9.8" y="18.6" width="6.5" height="4.8"/><rect x="18.7" y="18.6" width="4.5" height="4.8"/></g></svg>
<svg class="a" style="left:44.9px;top:370.52px" width="26" height="26" viewBox="0 0 26 26"><rect x="0" y="0" width="26" height="26" rx="3.6" fill="#6f6f6f"/><g fill="#ffffff"><rect x="2.8" y="2.7" width="20.4" height="6.2"/><rect x="2.8" y="11.3" width="4.4" height="5"/><rect x="9.8" y="11.3" width="6.5" height="5"/><rect x="18.7" y="11.3" width="4.5" height="5"/><rect x="2.8" y="18.6" width="4.4" height="4.8"/><rect x="9.8" y="18.6" width="6.5" height="4.8"/><rect x="18.7" y="18.6" width="4.5" height="4.8"/></g></svg>
<svg class="a" style="left:44.9px;top:440.03999999999996px" width="26" height="26" viewBox="0 0 26 26"><rect x="0" y="0" width="26" height="26" rx="3.6" fill="#6f6f6f"/><g fill="#ffffff"><rect x="2.8" y="2.7" width="20.4" height="6.2"/><rect x="2.8" y="11.3" width="4.4" height="5"/><rect x="9.8" y="11.3" width="6.5" height="5"/><rect x="18.7" y="11.3" width="4.5" height="5"/><rect x="2.8" y="18.6" width="4.4" height="4.8"/><rect x="9.8" y="18.6" width="6.5" height="4.8"/><rect x="18.7" y="18.6" width="4.5" height="4.8"/></g></svg>
<svg class="a" style="left:44.9px;top:509.56px" width="26" height="26" viewBox="0 0 26 26"><rect x="0" y="0" width="26" height="26" rx="3.6" fill="#6f6f6f"/><g fill="#ffffff"><rect x="2.8" y="2.7" width="20.4" height="6.2"/><rect x="2.8" y="11.3" width="4.4" height="5"/><rect x="9.8" y="11.3" width="6.5" height="5"/><rect x="18.7" y="11.3" width="4.5" height="5"/><rect x="2.8" y="18.6" width="4.4" height="4.8"/><rect x="9.8" y="18.6" width="6.5" height="4.8"/><rect x="18.7" y="18.6" width="4.5" height="4.8"/></g></svg>
<svg class="a" style="left:44.9px;top:579.0799999999999px" width="26" height="26" viewBox="0 0 26 26"><rect x="0" y="0" width="26" height="26" rx="3.6" fill="#6f6f6f"/><g fill="#ffffff"><rect x="2.8" y="2.7" width="20.4" height="6.2"/><rect x="2.8" y="11.3" width="4.4" height="5"/><rect x="9.8" y="11.3" width="6.5" height="5"/><rect x="18.7" y="11.3" width="4.5" height="5"/><rect x="2.8" y="18.6" width="4.4" height="4.8"/><rect x="9.8" y="18.6" width="6.5" height="4.8"/><rect x="18.7" y="18.6" width="4.5" height="4.8"/></g></svg>
<svg class="a" style="left:44.9px;top:648.5999999999999px" width="26" height="26" viewBox="0 0 26 26"><rect x="0" y="0" width="26" height="26" rx="3.6" fill="#6f6f6f"/><g fill="#ffffff"><rect x="2.8" y="2.7" width="20.4" height="6.2"/><rect x="2.8" y="11.3" width="4.4" height="5"/><rect x="9.8" y="11.3" width="6.5" height="5"/><rect x="18.7" y="11.3" width="4.5" height="5"/><rect x="2.8" y="18.6" width="4.4" height="4.8"/><rect x="9.8" y="18.6" width="6.5" height="4.8"/><rect x="18.7" y="18.6" width="4.5" height="4.8"/></g></svg>
<svg class="a" style="left:44.9px;top:718.12px" width="26" height="26" viewBox="0 0 26 26"><rect x="0" y="0" width="26" height="26" rx="3.6" fill="#6f6f6f"/><g fill="#ffffff"><rect x="2.8" y="2.7" width="20.4" height="6.2"/><rect x="2.8" y="11.3" width="4.4" height="5"/><rect x="9.8" y="11.3" width="6.5" height="5"/><rect x="18.7" y="11.3" width="4.5" height="5"/><rect x="2.8" y="18.6" width="4.4" height="4.8"/><rect x="9.8" y="18.6" width="6.5" height="4.8"/><rect x="18.7" y="18.6" width="4.5" height="4.8"/></g></svg>
<svg class="a" style="left:842.7px;top:407px" width="382" height="86" viewBox="842.7 407 382 86"><defs><clipPath id="c1"><rect x="844.7" y="409.7" width="377.3" height="80.5" rx="16"/></clipPath></defs>
<rect x="846.2" y="411.2" width="374.3" height="77.5" rx="14.5" fill="#fff" stroke="#a9c6c6" stroke-width="3"/>
<rect x="844.7" y="409.7" width="377.3" height="14.1" fill="#1f5052" clip-path="url(#c1)"/></svg>
<svg class="a" style="left:871.9px;top:440px" width="26" height="26" viewBox="0 0 26 26"><rect x="0" y="0" width="26" height="26" rx="3.6" fill="#1f5052"/><g fill="#ffffff"><rect x="2.8" y="2.7" width="20.4" height="6.2"/><rect x="2.8" y="11.3" width="4.4" height="5"/><rect x="9.8" y="11.3" width="6.5" height="5"/><rect x="18.7" y="11.3" width="4.5" height="5"/><rect x="2.8" y="18.6" width="4.4" height="4.8"/><rect x="9.8" y="18.6" width="6.5" height="4.8"/><rect x="18.7" y="18.6" width="4.5" height="4.8"/></g></svg>
<svg class="a" style="left:1397.3px;top:407px" width="382" height="86" viewBox="1397.3 407 382 86"><defs><clipPath id="c2"><rect x="1399.3" y="409.7" width="377.3" height="80.5" rx="16"/></clipPath></defs>
<rect x="1400.8" y="411.2" width="374.3" height="77.5" rx="14.5" fill="#fff" stroke="#f2c2d2" stroke-width="3"/>
<rect x="1399.3" y="409.7" width="377.3" height="14.1" fill="#dc5580" clip-path="url(#c2)"/></svg>
<svg class="a" style="left:1426.8px;top:440px" width="26" height="26" viewBox="0 0 26 26"><rect x="0" y="0" width="26" height="26" rx="3.6" fill="#dc5580"/><g fill="#ffffff"><rect x="2.8" y="2.7" width="20.4" height="6.2"/><rect x="2.8" y="11.3" width="4.4" height="5"/><rect x="9.8" y="11.3" width="6.5" height="5"/><rect x="18.7" y="11.3" width="4.5" height="5"/><rect x="2.8" y="18.6" width="4.4" height="4.8"/><rect x="9.8" y="18.6" width="6.5" height="4.8"/><rect x="18.7" y="18.6" width="4.5" height="4.8"/></g></svg>
<svg class="a" style="left:1200px;top:420px" width="220" height="60" viewBox="1200 420 220 60">
<line x1="1221" y1="450.4" x2="1271.7" y2="450.4" stroke="#5f5f5f" stroke-width="3.6"/>
<line x1="1349.8" y1="450.4" x2="1400.4" y2="450.4" stroke="#5f5f5f" stroke-width="3.6"/>
<circle cx="1221" cy="450.4" r="8.3" fill="#fff"/><circle cx="1271.7" cy="450.4" r="8.3" fill="#fff"/>
<circle cx="1349.8" cy="450.4" r="8.3" fill="#fff"/><circle cx="1400.4" cy="450.4" r="8.3" fill="#fff"/>
</svg>
<svg class="a" style="left:1262px;top:402px" width="100" height="100" viewBox="1262 402 100 100"><defs><filter id="sh" x="-20%" y="-20%" width="140%" height="140%"><feGaussianBlur in="SourceAlpha" stdDeviation="1.2"/><feOffset dx="-1" dy="2.2"/><feComponentTransfer><feFuncA type="linear" slope="0.55"/></feComponentTransfer><feMerge><feMergeNode/><feMergeNode in="SourceGraphic"/></feMerge></filter></defs><rect x="1272.25" y="411.55" width="77" height="77" rx="13.5" fill="#ecebf9" stroke="#3b2ec8" stroke-width="3.5" filter="url(#sh)"/></svg>
<svg class="a" style="left:1200px;top:420px" width="220" height="60" viewBox="1200 420 220 60">
<circle cx="1221" cy="450.4" r="8.3" fill="#fff"/><circle cx="1271.7" cy="450.4" r="8.3" fill="#fff"/>
<circle cx="1349.8" cy="450.4" r="8.3" fill="#fff"/><circle cx="1400.4" cy="450.4" r="8.3" fill="#fff"/>
<line x1="1221" y1="450.4" x2="1271.7" y2="450.4" stroke="#5f5f5f" stroke-width="3.6"/>
<line x1="1349.8" y1="450.4" x2="1400.4" y2="450.4" stroke="#5f5f5f" stroke-width="3.6"/>
<circle cx="1221" cy="450.4" r="4.2" fill="#5f5f5f"/><circle cx="1271.7" cy="450.4" r="4.2" fill="#5f5f5f"/>
<circle cx="1349.8" cy="450.4" r="4.2" fill="#5f5f5f"/><circle cx="1400.4" cy="450.4" r="4.2" fill="#5f5f5f"/>
<path d="M1311.4 440.05 A12.5 12.5 0 0 1 1311.4 461.75 A12.5 12.5 0 0 1 1311.4 440.05Z" fill="#b5b5b5"/>
<circle cx="1305.2" cy="450.9" r="12.5" fill="none" stroke="#3b2ec8" stroke-width="4"/>
<circle cx="1317.6" cy="450.9" r="12.5" fill="none" stroke="#3b2ec8" stroke-width="4"/>
</svg>
<div class="a" style="left:237.6px;top:805.3px;width:91.5px;height:31.9px;border:1.3px solid #8a8a8a;border-radius:17px"></div>
<svg class="a" style="left:394px;top:815px" width="26" height="15" viewBox="394 815 26 15"><g fill="#6e6e6e"><rect x="394" y="815.3" width="2.9" height="2.7"/><rect x="394" y="821.2" width="2.9" height="2.7"/><rect x="394" y="827.1" width="2.9" height="2.8"/><rect x="399.8" y="815.3" width="20.1" height="2.7"/><rect x="399.8" y="821.2" width="20.1" height="2.7"/><rect x="399.8" y="827.1" width="20.1" height="2.8"/></g></svg>
<div class="a" style="left:436px;top:793.7px;width:58px;height:57.4px;background:#ecebf9"></div>
<svg class="a" style="left:453px;top:812px" width="26" height="20" viewBox="453 812 26 20"><g fill="#3c2ec6"><rect x="453.1" y="812.2" width="7.2" height="18.8"/><rect x="462.1" y="812.2" width="6.9" height="18.8"/><rect x="470.9" y="812.2" width="7.1" height="18.8"/></g></svg>
<svg class="a" style="left:505px;top:806px" width="34" height="32" viewBox="505 806 34 32"><circle cx="519.1" cy="818.7" r="8.1" fill="none" stroke="#6e6e6e" stroke-width="2.9"/><path d="M525.4 825L533.8 833.4" stroke="#6e6e6e" stroke-width="3.2"/></svg>
<div class="a" style="left:1660px;top:812.3px;width:45px;height:20.3px;border-radius:10.2px;background:#949494"></div>
<div class="a" style="left:1651.1px;top:808.4px;width:28.8px;height:28.8px;border-radius:50%;background:#f6f6f8;box-shadow:0 1.5px 2px rgba(0,0,0,0.45)"></div>
<svg class="a" style="left:2020px;top:808px" width="24" height="28" viewBox="2020 808 24 28"><path d="M2025 821.6L2032.3 814.3L2039.6 821.6M2025 831.4L2032.3 824.1L2039.6 831.4" fill="none" stroke="#6e6e6e" stroke-width="2.6"/></svg>
<div class="a" style="left:4px;top:875px;width:2082px;height:1px;background:#dcdcdc"></div>
<div class="a" style="left:4px;top:877px;width:1390.5px;height:6px;background:#dc5580"></div>
<div class="a" style="left:1394.5px;top:877px;width:692px;height:6px;background:#1f5052"></div>
<div class="a" style="left:4px;top:883px;width:2082px;height:107px;background:#f8f8f9"></div>
<div class="a" style="left:4px;top:990px;width:2082px;height:1px;background:#dcdcdc"></div>
<div class="a" style="left:4px;top:1165px;width:2082px;height:1px;background:#dedede"></div>
<div class="a" style="left:4px;top:1222.7px;width:2082px;height:1px;background:#dedede"></div>
<div class="a" style="left:4px;top:1280.7px;width:2082px;height:1px;background:#dedede"></div>
<div class="a" style="left:4px;top:1338.7px;width:2082px;height:1px;background:#dedede"></div>
<div class="a" style="left:4px;top:1387.7px;width:2082px;height:1px;background:#dedede"></div>
<div class="a" style="left:350.7px;top:882.5px;width:1.2px;height:505.5px;background:#dcdcdc"></div>
<div class="a" style="left:698.3px;top:882.5px;width:1.2px;height:505.5px;background:#dcdcdc"></div>
<div class="a" style="left:1045.9px;top:882.5px;width:1.2px;height:505.5px;background:#dcdcdc"></div>
<div class="a" style="left:1393.6px;top:882.5px;width:1.2px;height:505.5px;background:#dcdcdc"></div>
<div class="a" style="left:1741.1px;top:882.5px;width:1.2px;height:505.5px;background:#dcdcdc"></div>
<svg class="a" style="left:34.2px;top:949px" width="22" height="22" viewBox="0 0 22 22"><rect x="0" y="0" width="22" height="22" rx="2.5" fill="#3f2ec6"/><path d="M3.3 11L8.3 15.8L18.3 5.6" fill="none" stroke="#fff" stroke-width="2.6"/></svg>
<svg class="a" style="left:381.4px;top:949px" width="22" height="22" viewBox="0 0 22 22"><rect x="0" y="0" width="22" height="22" rx="2.5" fill="#3f2ec6"/><path d="M3.3 11L8.3 15.8L18.3 5.6" fill="none" stroke="#fff" stroke-width="2.6"/></svg>
<svg class="a" style="left:726.8px;top:947px" width="26" height="26" viewBox="0 0 22 22"><rect x="0" y="0" width="22" height="22" rx="2.5" fill="#3f2ec6"/><path d="M3.3 11L8.3 15.8L18.3 5.6" fill="none" stroke="#fff" stroke-width="2.6"/></svg>
<svg class="a" style="left:1076.6000000000001px;top:949px" width="22" height="22" viewBox="0 0 22 22"><rect x="0" y="0" width="22" height="22" rx="2.5" fill="#3f2ec6"/><path d="M3.3 11L8.3 15.8L18.3 5.6" fill="none" stroke="#fff" stroke-width="2.6"/></svg>
<svg class="a" style="left:1424.3px;top:949px" width="22" height="22" viewBox="0 0 22 22"><rect x="0" y="0" width="22" height="22" rx="2.5" fill="#3f2ec6"/><path d="M3.3 11L8.3 15.8L18.3 5.6" fill="none" stroke="#fff" stroke-width="2.6"/></svg>
<svg class="a" style="left:1771.8px;top:949px" width="22" height="22" viewBox="0 0 22 22"><rect x="0" y="0" width="22" height="22" rx="2.5" fill="#3f2ec6"/><path d="M3.3 11L8.3 15.8L18.3 5.6" fill="none" stroke="#fff" stroke-width="2.6"/></svg>
<div class="a" style="left:27.20px;top:1006.50px;width:47.30px;height:52.40px;background:#66a5e3"></div>
<div class="a" style="left:27.20px;top:1062.20px;width:302.00px;height:52.70px;background:#66a5e3"></div>
<div class="a" style="left:374.55px;top:1051.95px;width:8.40px;height:61.75px;background:#66a5e3"></div>
<div class="a" style="left:385.81px;top:1044.00px;width:8.40px;height:69.70px;background:#66a5e3"></div>
<div class="a" style="left:397.07px;top:1033.76px;width:8.40px;height:79.94px;background:#66a5e3"></div>
<div class="a" style="left:408.33px;top:1044.00px;width:8.40px;height:69.70px;background:#66a5e3"></div>
<div class="a" style="left:419.59px;top:1038.20px;width:8.40px;height:75.50px;background:#66a5e3"></div>
<div class="a" style="left:430.85px;top:1044.00px;width:8.40px;height:69.70px;background:#66a5e3"></div>
<div class="a" style="left:442.11px;top:1051.95px;width:8.40px;height:61.75px;background:#66a5e3"></div>
<div class="a" style="left:453.37px;top:1044.00px;width:8.40px;height:69.70px;background:#66a5e3"></div>
<div class="a" style="left:464.63px;top:1033.76px;width:8.40px;height:79.94px;background:#66a5e3"></div>
<div class="a" style="left:475.89px;top:1044.00px;width:8.40px;height:69.70px;background:#66a5e3"></div>
<div class="a" style="left:487.15px;top:1051.95px;width:8.40px;height:61.75px;background:#66a5e3"></div>
<div class="a" style="left:498.41px;top:1044.00px;width:8.40px;height:69.70px;background:#66a5e3"></div>
<div class="a" style="left:509.67px;top:1045.30px;width:8.40px;height:68.40px;background:#66a5e3"></div>
<div class="a" style="left:520.93px;top:1038.20px;width:8.40px;height:75.50px;background:#66a5e3"></div>
<div class="a" style="left:532.19px;top:1027.00px;width:8.40px;height:86.70px;background:#66a5e3"></div>
<div class="a" style="left:543.45px;top:1017.90px;width:8.40px;height:95.80px;background:#66a5e3"></div>
<div class="a" style="left:554.71px;top:1006.40px;width:8.40px;height:107.30px;background:#66a5e3"></div>
<div class="a" style="left:565.97px;top:1017.90px;width:8.40px;height:95.80px;background:#66a5e3"></div>
<div class="a" style="left:577.23px;top:1027.00px;width:8.40px;height:86.70px;background:#66a5e3"></div>
<div class="a" style="left:588.49px;top:1044.00px;width:8.40px;height:69.70px;background:#66a5e3"></div>
<div class="a" style="left:599.75px;top:1059.10px;width:8.40px;height:54.60px;background:#66a5e3"></div>
<div class="a" style="left:611.01px;top:1072.80px;width:8.40px;height:40.90px;background:#66a5e3"></div>
<div class="a" style="left:622.27px;top:1065.90px;width:8.40px;height:47.80px;background:#66a5e3"></div>
<div class="a" style="left:633.53px;top:1059.10px;width:8.40px;height:54.60px;background:#66a5e3"></div>
<div class="a" style="left:644.79px;top:1081.85px;width:8.40px;height:31.85px;background:#66a5e3"></div>
<div class="a" style="left:656.05px;top:1112.10px;width:8.40px;height:1.60px;background:#66a5e3"></div>
<div class="a" style="left:667.31px;top:1106.50px;width:8.40px;height:7.20px;background:#66a5e3"></div>
<div class="a" style="left:722.15px;top:1006.40px;width:47.80px;height:9.30px;background:#66a5e3"></div>
<div class="a" style="left:722.15px;top:1018.80px;width:169.60px;height:9.30px;background:#66a5e3"></div>
<div class="a" style="left:722.15px;top:1031.20px;width:163.80px;height:9.30px;background:#66a5e3"></div>
<div class="a" style="left:722.15px;top:1043.60px;width:152.20px;height:9.30px;background:#66a5e3"></div>
<div class="a" style="left:722.15px;top:1056.00px;width:60.70px;height:9.30px;background:#66a5e3"></div>
<div class="a" style="left:722.15px;top:1068.40px;width:52.20px;height:9.30px;background:#66a5e3"></div>
<div class="a" style="left:722.15px;top:1080.80px;width:41.90px;height:9.30px;background:#66a5e3"></div>
<div class="a" style="left:722.15px;top:1093.20px;width:36.40px;height:9.30px;background:#66a5e3"></div>
<div class="a" style="left:722.15px;top:1105.60px;width:30.50px;height:9.30px;background:#b8d5f2"></div>
<div class="a" style="left:1070.00px;top:1068.80px;width:73.10px;height:44.90px;background:#66a5e3"></div>
<div class="a" style="left:1146.00px;top:1038.30px;width:73.60px;height:75.40px;background:#66a5e3"></div>
<div class="a" style="left:1222.50px;top:1006.40px;width:73.50px;height:107.30px;background:#66a5e3"></div>
<div class="a" style="left:1298.80px;top:1087.40px;width:73.20px;height:26.30px;background:#66a5e3"></div>
<div class="a" style="left:1417.80px;top:1006.40px;width:47.50px;height:24.70px;background:#66a5e3"></div>
<div class="a" style="left:1417.80px;top:1034.30px;width:302.00px;height:24.70px;background:#66a5e3"></div>
<div class="a" style="left:1417.80px;top:1062.20px;width:211.10px;height:24.70px;background:#66a5e3"></div>
<div class="a" style="left:1417.80px;top:1090.10px;width:151.80px;height:24.70px;background:#66a5e3"></div>
<div class="a" style="left:1765.10px;top:1006.40px;width:47.70px;height:9.30px;background:#66a5e3"></div>
<div class="a" style="left:1765.10px;top:1018.77px;width:108.70px;height:9.30px;background:#66a5e3"></div>
<div class="a" style="left:1765.10px;top:1031.14px;width:69.60px;height:9.30px;background:#66a5e3"></div>
<div class="a" style="left:1765.10px;top:1043.51px;width:59.50px;height:9.30px;background:#66a5e3"></div>
<div class="a" style="left:1765.10px;top:1055.88px;width:37.80px;height:9.30px;background:#66a5e3"></div>
<div class="a" style="left:1765.10px;top:1068.25px;width:133.60px;height:9.30px;background:#66a5e3"></div>
<div class="a" style="left:1765.10px;top:1080.62px;width:37.80px;height:9.30px;background:#66a5e3"></div>
<div class="a" style="left:1765.10px;top:1092.99px;width:37.80px;height:9.30px;background:#66a5e3"></div>
<div class="a" style="left:1765.10px;top:1105.36px;width:69.60px;height:9.30px;background:#b8d5f2"></div>
<div class="a" style="left:1819.4px;top:1411.1px;width:206.8px;height:51.2px;background:#3e2fc6;border-radius:5px;box-shadow:0 1.5px 2.5px rgba(0,0,0,0.3)"></div>
<div class="t" style="left:39.90px;top:38.25px;font-size:35.0px;font-weight:700;color:#000000;transform:scaleX(0.9471);">Join Datasets</div>
<div class="t" style="left:86.66px;top:133.24px;font-size:29.6px;font-weight:700;color:#222222;transform:scaleX(0.9426);">Datasets</div>
<div class="t" style="left:371.93px;top:137.28px;font-size:21.2px;font-weight:700;color:#3c2ec6;transform:scaleX(0.9746);">Import Data</div>
<div class="t" style="left:56.25px;top:217.12px;font-size:23.5px;font-weight:400;color:#6b6b6b;transform:scaleX(0.9521);-webkit-text-stroke:0.12px currentColor;">Search</div>
<div class="t" style="left:121.60px;top:303.64px;font-size:23.6px;font-weight:400;color:#222222;-webkit-text-stroke:0.12px currentColor;">sales-data-May2020.csv</div>
<div class="t" style="left:121.60px;top:373.16px;font-size:23.6px;font-weight:400;color:#222222;-webkit-text-stroke:0.12px currentColor;">sales-data-May2020.csv</div>
<div class="t" style="left:121.60px;top:442.68px;font-size:23.6px;font-weight:400;color:#222222;-webkit-text-stroke:0.12px currentColor;">sales-data-May2020.csv</div>
<div class="t" style="left:121.60px;top:512.20px;font-size:23.6px;font-weight:400;color:#222222;-webkit-text-stroke:0.12px currentColor;">sales-data-May2020.csv</div>
<div class="t" style="left:121.60px;top:581.72px;font-size:23.6px;font-weight:400;color:#222222;-webkit-text-stroke:0.12px currentColor;">sales-data-May2020.csv</div>
<div class="t" style="left:121.60px;top:651.24px;font-size:23.6px;font-weight:400;color:#222222;-webkit-text-stroke:0.12px currentColor;">sales-data-May2020.csv</div>
<div class="t" style="left:121.60px;top:720.76px;font-size:23.6px;font-weight:400;color:#222222;-webkit-text-stroke:0.12px currentColor;">sales-data-May2020.csv</div>
<div class="t" style="left:914.50px;top:442.84px;font-size:23.6px;font-weight:400;color:#222222;transform:scaleX(1.0052);-webkit-text-stroke:0.12px currentColor;">{datasetname}.csv</div>
<div class="t" style="left:1469.00px;top:442.84px;font-size:23.6px;font-weight:400;color:#222222;transform:scaleX(1.0052);-webkit-text-stroke:0.12px currentColor;">{datasetname}.csv</div>
<div class="t" style="left:51.20px;top:806.95px;font-size:31.0px;font-weight:700;color:#222222;transform:scaleX(0.9000);">Join Preview</div>
<div class="t" style="left:251.82px;top:813.32px;font-size:19.5px;font-weight:400;color:#222222;transform:scaleX(0.9800);-webkit-text-stroke:0.12px currentColor;">Sample</div>
<div class="t" style="left:1721.80px;top:811.90px;font-size:24.0px;font-weight:400;color:#222222;-webkit-text-stroke:0.12px currentColor;">Show dropped columns</div>
<div class="t" style="left:35.20px;top:904.75px;font-size:18.3px;font-weight:400;color:#6b6b6b;transform:scaleX(0.9918);-webkit-text-stroke:0.12px currentColor;">{selecteddataset2}.csv</div>
<div class="t" style="left:87.40px;top:950.39px;font-size:20.6px;font-weight:700;color:#222222;transform:scaleX(0.9386);">Sold</div>
<div class="t" style="left:286.30px;top:951.07px;font-size:19.8px;font-weight:400;color:#222222;transform:scaleX(0.9050);-webkit-text-stroke:0.12px currentColor;">ABC</div>
<div class="t" style="left:382.40px;top:904.75px;font-size:18.3px;font-weight:400;color:#6b6b6b;transform:scaleX(0.9918);-webkit-text-stroke:0.12px currentColor;">{selecteddataset2}.csv</div>
<div class="t" style="left:434.60px;top:950.39px;font-size:20.6px;font-weight:700;color:#222222;transform:scaleX(0.9120);">Price</div>
<div class="t" style="left:633.50px;top:951.07px;font-size:19.8px;font-weight:400;color:#222222;transform:scaleX(0.9050);-webkit-text-stroke:0.12px currentColor;">ABC</div>
<div class="t" style="left:730.00px;top:904.75px;font-size:18.3px;font-weight:400;color:#6b6b6b;transform:scaleX(0.9918);-webkit-text-stroke:0.12px currentColor;">{selecteddataset2}.csv</div>
<div class="t" style="left:782.20px;top:950.39px;font-size:20.6px;font-weight:700;color:#222222;transform:scaleX(0.9154);">Age</div>
<div class="t" style="left:981.10px;top:951.07px;font-size:19.8px;font-weight:400;color:#222222;transform:scaleX(0.9050);-webkit-text-stroke:0.12px currentColor;">ABC</div>
<div class="t" style="left:1077.60px;top:904.75px;font-size:18.3px;font-weight:400;color:#6b6b6b;transform:scaleX(0.9918);-webkit-text-stroke:0.12px currentColor;">{selecteddataset2}.csv</div>
<div class="t" style="left:1129.80px;top:950.39px;font-size:20.6px;font-weight:700;color:#222222;transform:scaleX(0.9270);">Discount</div>
<div class="t" style="left:1328.70px;top:951.07px;font-size:19.8px;font-weight:400;color:#222222;transform:scaleX(0.9050);-webkit-text-stroke:0.12px currentColor;">ABC</div>
<div class="t" style="left:1425.30px;top:904.75px;font-size:18.3px;font-weight:400;color:#6b6b6b;transform:scaleX(0.9918);-webkit-text-stroke:0.12px currentColor;">{selecteddataset1}.csv</div>
<div class="t" style="left:1477.50px;top:950.39px;font-size:20.6px;font-weight:700;color:#222222;transform:scaleX(0.9194);">Fabric</div>
<div class="t" style="left:1676.40px;top:951.07px;font-size:19.8px;font-weight:400;color:#222222;transform:scaleX(0.9050);-webkit-text-stroke:0.12px currentColor;">ABC</div>
<div class="t" style="left:1772.80px;top:904.75px;font-size:18.3px;font-weight:400;color:#6b6b6b;transform:scaleX(0.9918);-webkit-text-stroke:0.12px currentColor;">{selecteddataset1}.csv</div>
<div class="t" style="left:1825.00px;top:950.39px;font-size:20.6px;font-weight:700;color:#222222;transform:scaleX(0.9154);">Age</div>
<div class="t" style="left:2023.90px;top:951.07px;font-size:19.8px;font-weight:400;color:#222222;transform:scaleX(0.9050);-webkit-text-stroke:0.12px currentColor;">ABC</div>
<div class="t" style="left:27.50px;top:1126.74px;font-size:20.3px;font-weight:400;color:#6b6b6b;-webkit-text-stroke:0.12px currentColor;">2 categories</div>
<div class="t" style="left:375.20px;top:1126.74px;font-size:20.3px;font-weight:400;color:#6b6b6b;-webkit-text-stroke:0.12px currentColor;">2</div>
<div class="t" style="left:613.70px;top:1126.74px;font-size:20.3px;font-weight:400;color:#6b6b6b;-webkit-text-stroke:0.12px currentColor;">200.99</div>
<div class="t" style="left:721.99px;top:1126.74px;font-size:20.3px;font-weight:400;color:#6b6b6b;transform:scaleX(1.0083);-webkit-text-stroke:0.12px currentColor;">12 categories</div>
<div class="t" style="left:1070.00px;top:1126.74px;font-size:20.3px;font-weight:400;color:#6b6b6b;-webkit-text-stroke:0.12px currentColor;">1</div>
<div class="t" style="left:1359.80px;top:1126.74px;font-size:20.3px;font-weight:400;color:#6b6b6b;-webkit-text-stroke:0.12px currentColor;">4</div>
<div class="t" style="left:1417.90px;top:1126.74px;font-size:20.3px;font-weight:400;color:#6b6b6b;-webkit-text-stroke:0.12px currentColor;">4 categories</div>
<div class="t" style="left:1766.30px;top:1126.74px;font-size:20.3px;font-weight:400;color:#6b6b6b;-webkit-text-stroke:0.12px currentColor;">22 categories</div>
<div class="t" style="left:28.00px;top:1183.75px;font-size:21.0px;font-weight:400;color:#222222;transform:scaleX(0.8824);-webkit-text-stroke:0.12px currentColor;">Yes</div>
<div class="t" style="left:375.20px;top:1183.75px;font-size:21.0px;font-weight:400;color:#222222;transform:scaleX(0.9865);-webkit-text-stroke:0.12px currentColor;">29.99</div>
<div class="t" style="left:721.82px;top:1183.75px;font-size:21.0px;font-weight:400;color:#222222;transform:scaleX(0.9796);-webkit-text-stroke:0.12px currentColor;">Southwest</div>
<div class="t" style="left:1070.40px;top:1183.75px;font-size:21.0px;font-weight:400;color:#222222;-webkit-text-stroke:0.12px currentColor;">23</div>
<div class="t" style="left:1418.10px;top:1183.75px;font-size:21.0px;font-weight:400;color:#222222;transform:scaleX(0.8824);-webkit-text-stroke:0.12px currentColor;">Yes</div>
<div class="t" style="left:1765.60px;top:1183.75px;font-size:21.0px;font-weight:400;color:#222222;transform:scaleX(0.8824);-webkit-text-stroke:0.12px currentColor;">Yes</div>
<div class="t" style="left:28.00px;top:1241.75px;font-size:21.0px;font-weight:400;color:#222222;transform:scaleX(0.8824);-webkit-text-stroke:0.12px currentColor;">Yes</div>
<div class="t" style="left:375.20px;top:1241.75px;font-size:21.0px;font-weight:400;color:#222222;transform:scaleX(0.9865);-webkit-text-stroke:0.12px currentColor;">29.99</div>
<div class="t" style="left:721.82px;top:1241.75px;font-size:21.0px;font-weight:400;color:#222222;transform:scaleX(0.9796);-webkit-text-stroke:0.12px currentColor;">Southwest</div>
<div class="t" style="left:1070.40px;top:1241.75px;font-size:21.0px;font-weight:400;color:#222222;-webkit-text-stroke:0.12px currentColor;">23</div>
<div class="t" style="left:1418.10px;top:1241.75px;font-size:21.0px;font-weight:400;color:#222222;transform:scaleX(0.8824);-webkit-text-stroke:0.12px currentColor;">Yes</div>
<div class="t" style="left:1765.60px;top:1241.75px;font-size:21.0px;font-weight:400;color:#222222;transform:scaleX(0.8824);-webkit-text-stroke:0.12px currentColor;">Yes</div>
<div class="t" style="left:28.00px;top:1299.75px;font-size:21.0px;font-weight:400;color:#222222;transform:scaleX(0.8824);-webkit-text-stroke:0.12px currentColor;">Yes</div>
<div class="t" style="left:375.20px;top:1299.75px;font-size:21.0px;font-weight:400;color:#222222;transform:scaleX(0.9865);-webkit-text-stroke:0.12px currentColor;">29.99</div>
<div class="t" style="left:721.82px;top:1299.75px;font-size:21.0px;font-weight:400;color:#222222;transform:scaleX(0.9796);-webkit-text-stroke:0.12px currentColor;">Southwest</div>
<div class="t" style="left:1070.40px;top:1299.75px;font-size:21.0px;font-weight:400;color:#222222;-webkit-text-stroke:0.12px currentColor;">23</div>
<div class="t" style="left:1418.10px;top:1299.75px;font-size:21.0px;font-weight:400;color:#222222;transform:scaleX(0.8824);-webkit-text-stroke:0.12px currentColor;">Yes</div>
<div class="t" style="left:1765.60px;top:1299.75px;font-size:21.0px;font-weight:400;color:#222222;transform:scaleX(0.8824);-webkit-text-stroke:0.12px currentColor;">Yes</div>
<div class="t" style="left:28.00px;top:1357.75px;font-size:21.0px;font-weight:400;color:#222222;transform:scaleX(0.8824);-webkit-text-stroke:0.12px currentColor;">Yes</div>
<div class="t" style="left:375.20px;top:1357.75px;font-size:21.0px;font-weight:400;color:#222222;transform:scaleX(0.9865);-webkit-text-stroke:0.12px currentColor;">29.99</div>
<div class="t" style="left:721.82px;top:1357.75px;font-size:21.0px;font-weight:400;color:#222222;transform:scaleX(0.9796);-webkit-text-stroke:0.12px currentColor;">Southwest</div>
<div class="t" style="left:1070.40px;top:1357.75px;font-size:21.0px;font-weight:400;color:#222222;-webkit-text-stroke:0.12px currentColor;">23</div>
<div class="t" style="left:1418.10px;top:1357.75px;font-size:21.0px;font-weight:400;color:#222222;transform:scaleX(0.8824);-webkit-text-stroke:0.12px currentColor;">Yes</div>
<div class="t" style="left:1765.60px;top:1357.75px;font-size:21.0px;font-weight:400;color:#222222;transform:scaleX(0.8824);-webkit-text-stroke:0.12px currentColor;">Yes</div>
<div class="t" style="left:38.30px;top:1426.15px;font-size:21.0px;font-weight:400;color:#6b6b6b;-webkit-text-stroke:0.12px currentColor;">Previewing first 100 rows</div>
<div class="t" style="left:1733.30px;top:1426.69px;font-size:20.6px;font-weight:700;color:#3c2ec6;transform:scaleX(0.8821);">Close</div>
<div class="t" style="left:1842.90px;top:1426.18px;font-size:21.2px;font-weight:700;color:#ffffff;transform:scaleX(0.9464);">Save joined data</div>
<div class="a" style="left:30px;top:1363px;width:896.8px;height:9.8px;border-radius:0 5px 5px 0;background:#aaaaac;box-shadow:0 1.5px 2px rgba(0,0,0,0.2)"></div>
</body></html>
